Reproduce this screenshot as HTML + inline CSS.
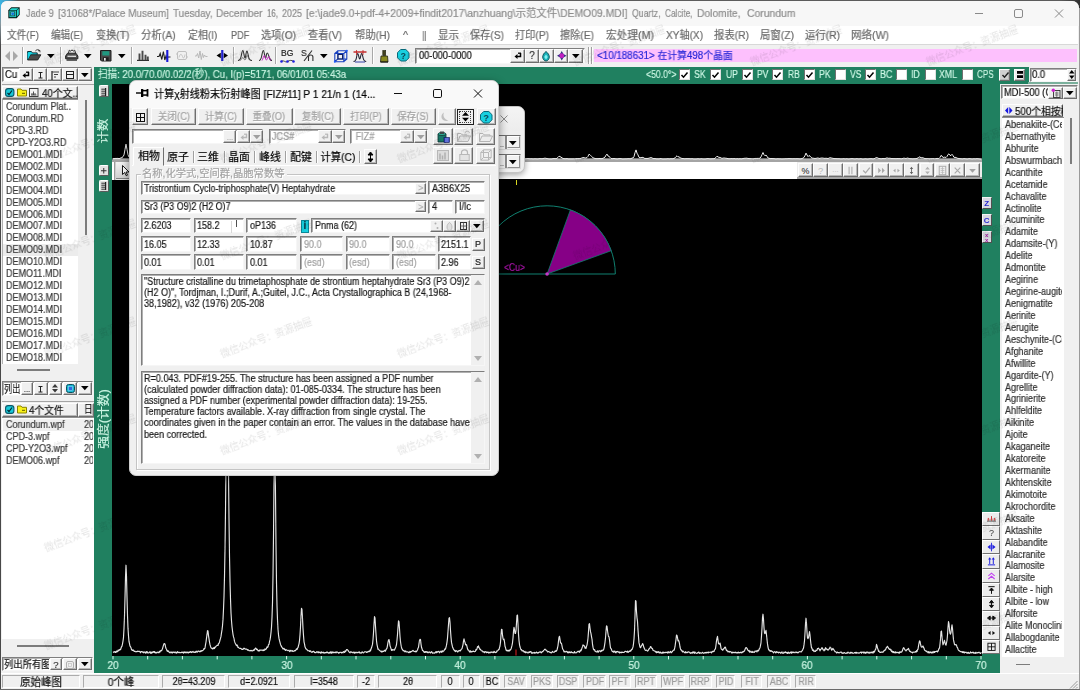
<!DOCTYPE html>
<html><head><meta charset="utf-8"><title>Jade 9</title>
<style>
html,body{margin:0;padding:0;}
body{width:1080px;height:690px;position:relative;overflow:hidden;background:#f0f0f0;font-family:"Liberation Sans","Noto Sans CJK SC",sans-serif;}
div{position:absolute;box-sizing:border-box;}
svg{position:absolute;overflow:visible;}
.t{white-space:nowrap;font-family:"Liberation Sans","Noto Sans CJK SC",sans-serif;will-change:transform;-webkit-text-stroke:.2px currentColor;}
.sunk{border:1.500px solid;border-color:#7e7e7e #f6f6f6 #f6f6f6 #7e7e7e;box-shadow:inset 1px 1px 0 #b0b0b0;}
.btn{background:#f0f0f0;border:1px solid;border-color:#fdfdfd #6e6e6e #6e6e6e #fdfdfd;box-shadow:inset -1px -1px 0 #b8b8b8;}
.g{background:#208060;}
.k{background:#000;}
.wm{-webkit-text-stroke:0;color:#000;opacity:.12;font-size:9.700px;line-height:12px;transform:rotate(-20.300deg);transform-origin:0 50%;white-space:nowrap;}
</style></head><body>

<div class="" style="left:0.0px;top:0.0px;width:1080.0px;height:14.0px;background:linear-gradient(90deg,#3ab4e4 0,#4a98b8 8px,#5c5c5c 18px,#5c5c5c 1060px,#303030 1080px);"></div>
<div class="" style="left:0.0px;top:6.0px;width:2.0px;height:684.0px;background:linear-gradient(180deg,#4ab0dc 0,#8898a0 18px,#484848 40px,#484848 100%);"></div>
<div class="" style="left:0.8px;top:0.7px;width:1078.2px;height:690.0px;background:#f0f0f0;border-radius:6px 7px 0 0;"></div>
<div class="" style="left:0.8px;top:0.7px;width:1078.2px;height:25.5px;background:#f7f7f7;border-radius:6px 7px 0 0;"></div>
<svg style="left:8px;top:7px" width="12" height="11.5" viewBox="0 0 12 11.5"><path d="M0.300 3.200l3-3h8.400v7.500l-3 3.500h-8.400z" fill="#06201c"/><rect x="1.400" y="3.600" width="6.600" height="6.500" fill="#1ec8c0"/><path d="M1.600 3l2-1.700h6.900l-2 1.700zM8.800 3.600l2-1.900v5.800l-2 2.300z" fill="#22d8d0"/><rect x="2.700" y="4.800" width="4" height="4" fill="#6ae8e4" stroke="#0a4a48" stroke-width=".8"/><circle cx="4.700" cy="6.800" r="1.400" fill="#1470e0"/></svg>
<div class="t title" style="left:26.0px;transform-origin:0 50%;top:7.0px;font-size:11px;line-height:13px;color:#8c8c8c;transform:scaleX(0.8356);">Jade 9</div>
<div class="t title" style="left:58.0px;transform-origin:0 50%;top:7.0px;font-size:11px;line-height:13px;color:#8c8c8c;transform:scaleX(0.903);">[31068*/Palace Museum]</div>
<div class="t title" style="left:173.0px;transform-origin:0 50%;top:7.0px;font-size:11px;line-height:13px;color:#8c8c8c;transform:scaleX(0.8971);">Tuesday,</div>
<div class="t title" style="left:216.0px;transform-origin:0 50%;top:7.0px;font-size:11px;line-height:13px;color:#8c8c8c;transform:scaleX(0.9163);">December</div>
<div class="t title" style="left:266.5px;transform-origin:0 50%;top:7.0px;font-size:11px;line-height:13px;color:#8c8c8c;transform:scaleX(0.7191);">16,</div>
<div class="t title" style="left:281.5px;transform-origin:0 50%;top:7.0px;font-size:11px;line-height:13px;color:#8c8c8c;transform:scaleX(0.8168);">2025</div>
<div class="t title" style="left:306.0px;transform-origin:0 50%;top:7.0px;font-size:11px;line-height:13px;color:#8c8c8c;transform:scaleX(0.9431);">[e:\jade9.0+pdf-4+2009+findit2017\anzhuang\示范文件\DEMO09.MDI]</div>
<div class="t title" style="left:631.5px;transform-origin:0 50%;top:7.0px;font-size:11px;line-height:13px;color:#8c8c8c;transform:scaleX(0.79);">Quartz,</div>
<div class="t title" style="left:665.0px;transform-origin:0 50%;top:7.0px;font-size:11px;line-height:13px;color:#8c8c8c;transform:scaleX(0.7496);">Calcite,</div>
<div class="t title" style="left:696.5px;transform-origin:0 50%;top:7.0px;font-size:11px;line-height:13px;color:#8c8c8c;transform:scaleX(0.9361);">Dolomite,</div>
<div class="t title" style="left:746.5px;transform-origin:0 50%;top:7.0px;font-size:11px;line-height:13px;color:#8c8c8c;transform:scaleX(0.9443);">Corundum</div>
<svg style="left:960px;top:0" width="118" height="26" viewBox="0 0 118 26"><g stroke="#8a8a8a" stroke-width="1" fill="none"><path d="M15 13.5h8"/><rect x="54.5" y="9.5" width="8" height="8" rx="1.5"/><path d="M95 9.5l8 8M103 9.5l-8 8"/></g></svg>
<div class="" style="left:1.0px;top:26.0px;width:1077.0px;height:18.0px;background:#fff;"></div>
<div class="t " style="left:7.3px;transform-origin:0 50%;top:28.5px;font-size:11px;line-height:13px;color:#6a6a6a;transform:scaleX(0.8794);">文件(F)</div>
<div class="t " style="left:51.0px;transform-origin:0 50%;top:28.5px;font-size:11px;line-height:13px;color:#6a6a6a;transform:scaleX(0.8726);">编辑(E)</div>
<div class="t " style="left:95.7px;transform-origin:0 50%;top:28.5px;font-size:11px;line-height:13px;color:#6a6a6a;transform:scaleX(0.9238);">变换(T)</div>
<div class="t " style="left:141.0px;transform-origin:0 50%;top:28.5px;font-size:11px;line-height:13px;color:#6a6a6a;transform:scaleX(0.9462);">分析(A)</div>
<div class="t " style="left:187.7px;transform-origin:0 50%;top:28.5px;font-size:11px;line-height:13px;color:#6a6a6a;transform:scaleX(0.9046);">定相(I)</div>
<div class="t " style="left:230.7px;transform-origin:0 50%;top:28.5px;font-size:11px;line-height:13px;color:#6a6a6a;transform:scaleX(0.8318);">PDF</div>
<div class="t " style="left:261.0px;transform-origin:0 50%;top:28.5px;font-size:11px;line-height:13px;color:#6a6a6a;transform:scaleX(0.9237);">选项(O)</div>
<div class="t " style="left:308.0px;transform-origin:0 50%;top:28.5px;font-size:11px;line-height:13px;color:#6a6a6a;transform:scaleX(0.9271);">查看(V)</div>
<div class="t " style="left:355.0px;transform-origin:0 50%;top:28.5px;font-size:11px;line-height:13px;color:#6a6a6a;transform:scaleX(0.9388);">帮助(H)</div>
<div class="t " style="left:403.0px;transform-origin:0 50%;top:28.5px;font-size:11px;line-height:13px;color:#6a6a6a;transform:scaleX(0.9668);">^</div>
<div class="t " style="left:422.0px;transform-origin:0 50%;top:28.5px;font-size:11px;line-height:13px;color:#6a6a6a;transform:scaleX(0.7869);">||</div>
<div class="t " style="left:438.0px;transform-origin:0 50%;top:28.5px;font-size:11px;line-height:13px;color:#6a6a6a;transform:scaleX(0.9545);">显示</div>
<div class="t " style="left:470.0px;transform-origin:0 50%;top:28.5px;font-size:11px;line-height:13px;color:#6a6a6a;transform:scaleX(0.9271);">保存(S)</div>
<div class="t " style="left:515.0px;transform-origin:0 50%;top:28.5px;font-size:11px;line-height:13px;color:#6a6a6a;transform:scaleX(0.9271);">打印(P)</div>
<div class="t " style="left:560.0px;transform-origin:0 50%;top:28.5px;font-size:11px;line-height:13px;color:#6a6a6a;transform:scaleX(0.9271);">擦除(E)</div>
<div class="t " style="left:606.0px;transform-origin:0 50%;top:28.5px;font-size:11px;line-height:13px;color:#6a6a6a;transform:scaleX(0.9697);">宏处理(M)</div>
<div class="t " style="left:666.0px;transform-origin:0 50%;top:28.5px;font-size:11px;line-height:13px;color:#6a6a6a;transform:scaleX(0.9171);">XY轴(X)</div>
<div class="t " style="left:714.0px;transform-origin:0 50%;top:28.5px;font-size:11px;line-height:13px;color:#6a6a6a;transform:scaleX(0.9388);">报表(R)</div>
<div class="t " style="left:760.0px;transform-origin:0 50%;top:28.5px;font-size:11px;line-height:13px;color:#6a6a6a;transform:scaleX(0.9432);">局窗(Z)</div>
<div class="t " style="left:805.0px;transform-origin:0 50%;top:28.5px;font-size:11px;line-height:13px;color:#6a6a6a;transform:scaleX(0.9388);">运行(R)</div>
<div class="t " style="left:851.0px;transform-origin:0 50%;top:28.5px;font-size:11px;line-height:13px;color:#6a6a6a;transform:scaleX(0.9567);">网络(W)</div>
<div class="" style="left:1.0px;top:44.0px;width:1077.0px;height:22.0px;background:#f0f0f0;border-top:1px solid #d8d8d8;"></div>
<svg style="left:4.5px;top:50.5px" width="13" height="10" viewBox="0 0 13 10"><path d="M5 0v10L0 5zM8 0v10l5-5z" fill="#a8a8a8"/></svg>
<div class="" style="left:22.0px;top:47.0px;width:2.0px;height:17.0px;border-left:1px solid #a8a8a8;border-right:1px solid #fff;"></div>
<svg style="left:27.0px;top:49.3px" width="14.5" height="12" viewBox="0 0 14.5 12"><path d="M0.6 11v-8.5h3.8l1 1.4h4.8v2" fill="#14d4e4" stroke="#0a3038" stroke-width="1"/><path d="M0.6 11l3-5.200h10.300l-3.200 5.200z" fill="#4a4a4a" stroke="#202020" stroke-width=".9"/><path d="M0.6 11l2.600-5v-2.300h-2.600z" fill="#14d4e4"/><path d="M8.300 2c1.300-1.600 3.300-1.800 4.500-.3M13 3.300l-.2-2-1.800.6" stroke="#303030" fill="none" stroke-width=".9"/></svg>
<svg style="left:47.0px;top:53.9px" width="7.6" height="4.3" viewBox="0 0 7.6 4.3"><path d="M0 0h7.6l-3.8 4.3z" fill="#000"/></svg>
<div class="" style="left:60.0px;top:47.0px;width:2.0px;height:17.0px;border-left:1px solid #a8a8a8;border-right:1px solid #fff;"></div>
<svg style="left:64.8px;top:49.3px" width="13.5" height="12" viewBox="0 0 13.5 12"><path d="M3.300 4.500l1-3.300 1.500 1 1.200-1.400 1.200 1.400 1.500-1 1 3.300" fill="#f4f4f4" stroke="#202020" stroke-width=".9"/><path d="M0.600 7l2-2.800h8.300l2 2.800v2.800h-12.300z" fill="#505050" stroke="#181818" stroke-width=".9"/><path d="M2.500 7.300h8.500" stroke="#f0f0f0" stroke-width="1.200"/><path d="M1.500 11h10.500" stroke="#303030" stroke-width="1.500"/></svg>
<svg style="left:84.2px;top:53.9px" width="7.6" height="4.3" viewBox="0 0 7.6 4.3"><path d="M0 0h7.6l-3.8 4.3z" fill="#000"/></svg>
<svg style="left:100.0px;top:49.8px" width="11.5" height="11.5" viewBox="0 0 11.5 11.5"><path d="M0.500 0.500h10.500v10.500h-9.500l-1-1z" fill="#484848" stroke="#202020"/><rect x="2.300" y="1.200" width="7" height="4.300" fill="#209880"/><rect x="3" y="7.300" width="5.600" height="3.700" fill="#202020"/><rect x="4" y="8" width="1.700" height="2.700" fill="#e8e8e8"/></svg>
<svg style="left:118.4px;top:53.9px" width="7.6" height="4.3" viewBox="0 0 7.6 4.3"><path d="M0 0h7.6l-3.8 4.3z" fill="#000"/></svg>
<div class="" style="left:131.0px;top:47.0px;width:2.0px;height:17.0px;border-left:1px solid #a8a8a8;border-right:1px solid #fff;"></div>
<svg style="left:137.0px;top:50.0px" width="12" height="11" viewBox="0 0 12 11"><path d="M0 10.400h12" stroke="#303030" stroke-width="1.200"/><path d="M2.500 10V3.500M5.500 10V0.800M8.500 10V4.800M10.800 10V6.500" stroke="#484848" stroke-width="1.900"/></svg>
<svg style="left:156.5px;top:49.5px" width="13.5" height="12" viewBox="0 0 13.5 12"><path d="M0 6.500h2l1.200-3 1.600 6 1.600-8 1.400 8.500 1.200-4 1 2.500 1-1.500h2.500" fill="none" stroke="#202020" stroke-width="1.100"/><path d="M10.300 0v12" stroke="#1818d8" stroke-width="2.100"/></svg>
<svg style="left:176.0px;top:50.0px" width="12" height="11" viewBox="0 0 12 11"><rect x="1.5" y="1.5" width="9" height="8" rx="1.5" fill="none" stroke="#c0c0c0"/><path d="M3 7.5c1-4 2.5-4 3.5-1s2 1 2.5-2" fill="none" stroke="#c4c4c4"/><path d="M0 4h2M10 7h2" stroke="#c0c0c0"/></svg>
<svg style="left:195.0px;top:51.0px" width="13.5" height="9" viewBox="0 0 13.5 9"><path d="M0 5h1.5l1-2.5 1.2 4.5 1.3-7 1.3 8.5 1.2-6 1 4 1-2.5 1 1.5h2" fill="none" stroke="#b8b8b8" stroke-width="1"/></svg>
<svg style="left:215.5px;top:50.0px" width="12.5" height="11" viewBox="0 0 12.5 11"><path d="M4.800 2.700v5.600L0.500 5.500zM7.700 2.700v5.600l4.300-2.800z" fill="#000"/><path d="M6.250 0v11" stroke="#2020d0" stroke-width="2.200"/></svg>
<div class="" style="left:233.0px;top:47.0px;width:2.0px;height:17.0px;border-left:1px solid #a8a8a8;border-right:1px solid #fff;"></div>
<svg style="left:238.0px;top:50.0px" width="14" height="11" viewBox="0 0 14 11"><path d="M0 10.5c2 0 2.5-1 3.2-4.5s1-5.5 1.6-5.5 1 3 1.5 5.5 1 3 1.4 0 .8-5 1.3-5 1 3 1.6 6 1.5 3.5 3.4 3.5" fill="none" stroke="#303030" stroke-width="1.1"/><path d="M2 10.5c1.5-.5 2-3 2.8-3s1.2 2.5 2.2 2.5 1.4-4.500 2.200-4.500 1.500 4.500 3 5" fill="none" stroke="#606060" stroke-width=".8"/></svg>
<svg style="left:259.0px;top:50.0px" width="13" height="11" viewBox="0 0 13 11"><path d="M0 10.500c1.500 0 2-1 2.700-4.500s1-5.500 1.600-5.500 1 3 1.500 5.500 1 3 1.400 0 .8-3 1.300-3 1 2 1.600 4 1.500 3.500 2.900 3.500" fill="none" stroke="#303030" stroke-width="1.1"/><path d="M3 10.500c1-1 1.500-5 2.300-5s1.200 4.500 2.200 4.500 1.400-3.500 2.200-3.500 1 3 2 4" fill="none" stroke="#c020c0" stroke-width="1"/></svg>
<div class="" style="left:275.0px;top:47.0px;width:2.0px;height:17.0px;border-left:1px solid #a8a8a8;border-right:1px solid #fff;"></div>
<div class="t " style="left:281.0px;transform-origin:0 50%;top:48.0px;font-size:8.5px;line-height:10.5px;color:#202020;transform:scaleX(1.0);">BG</div>
<svg style="left:280.0px;top:58.5px" width="15" height="4" viewBox="0 0 15 4"><path d="M1 2.500c3-2 4 1.500 6.500 0s4-1.500 6.500 0" fill="none" stroke="#202020" stroke-width=".8"/><circle cx="1.500" cy="2.500" r="1.300" fill="#2020e0"/><circle cx="7.500" cy="2.500" r="1.300" fill="#2020e0"/><circle cx="13.500" cy="2.500" r="1.300" fill="#2020e0"/></svg>
<div class="t " style="left:300.8px;transform-origin:0 50%;top:47.5px;font-size:9px;line-height:11px;color:#303030;transform:scaleX(0.95);">S</div>
<svg style="left:303.0px;top:50.0px" width="11" height="12" viewBox="0 0 11 12"><path d="M9 0.500L1 11" stroke="#303030" stroke-width="1.1"/><path d="M5.500 11v-4c0-1.500 1-2 2.200-2s2.200.5 2.200 2v4" fill="none" stroke="#303030" stroke-width="1.100"/></svg>
<svg style="left:319.5px;top:53.9px" width="7.6" height="4.3" viewBox="0 0 7.6 4.3"><path d="M0 0h7.6l-3.8 4.3z" fill="#000"/></svg>
<svg style="left:334.0px;top:49.5px" width="13.5" height="12.5" viewBox="0 0 13.5 12.5"><path d="M0.800 3.500h9v8.200h-9zM3.800 0.800h9v8.200h-9zM0.800 3.500l3-2.700M9.800 3.500l3-2.700M0.800 11.700l3-2.700M9.800 11.700l3-2.700" fill="none" stroke="#1840c0" stroke-width="1.100"/><rect x="4" y="4.500" width="4.500" height="4.500" fill="none" stroke="#102060" stroke-width="1"/><circle cx="0.800" cy="11.700" r="1" fill="#2060ff"/><circle cx="12.800" cy="0.800" r="1" fill="#2060ff"/></svg>
<svg style="left:353.0px;top:49.5px" width="14" height="12.5" viewBox="0 0 14 12.5"><path d="M0.500 2h13" stroke="#c02020" stroke-width="1.400"/><path d="M0.500 11.500c2 0 2.500-1 3-4s.8-4 1.300-4 .8 2 1.200 4 1 2 1.400 0 .8-4 1.300-4 .9 2 1.300 4 1 4 3.200 4" fill="none" stroke="#202030" stroke-width="1.100"/><path d="M2 12h10" stroke="#2030a0" stroke-width=".9"/><path d="M3.500 0v5M10 0v5" stroke="#c02020" stroke-width=".8"/></svg>
<div class="" style="left:372.0px;top:47.0px;width:2.0px;height:17.0px;border-left:1px solid #a8a8a8;border-right:1px solid #fff;"></div>
<svg style="left:379.5px;top:49.5px" width="8.5" height="12.5" viewBox="0 0 8.5 12.5"><rect x="2.800" y="0.500" width="2.900" height="5" fill="#404020" stroke="#202010" stroke-width=".6"/><path d="M1 6h6.500l0.500 6h-7.500z" fill="#888820" stroke="#202010" stroke-width=".8"/><path d="M0.500 12h7.500" stroke="#101010"/></svg>
<svg style="left:396.5px;top:49.3px" width="12.5" height="12.5" viewBox="0 0 12.5 12.5"><path d="M3.700 0.500h5.100l3.200 3.200v5.100l-3.200 3.200h-5.100l-3.200-3.200v-5.100z" fill="#18d0e0" stroke="#086878" stroke-width="1"/><text x="6.250" y="9.600" font-family="Liberation Sans,sans-serif" font-size="9" font-weight="bold" fill="#084858" text-anchor="middle">?</text></svg>
<div class="sunk" style="left:415.0px;top:47.8px;width:169.5px;height:15.8px;background:#fff;"></div>
<div class="t " style="left:418.5px;transform-origin:0 50%;top:49.7px;font-size:10px;line-height:12px;color:#101010;transform:scaleX(0.93);">00-000-0000</div>
<div class="btn" style="left:510.0px;top:49.2px;width:14.6px;height:13.6px;"></div>
<div class="btn" style="left:524.5px;top:49.2px;width:14.6px;height:13.6px;"></div>
<div class="btn" style="left:539.0px;top:49.2px;width:14.6px;height:13.6px;"></div>
<div class="btn" style="left:553.7px;top:49.2px;width:14.6px;height:13.6px;"></div>
<div class="btn" style="left:568.4px;top:49.2px;width:14.6px;height:13.6px;"></div>
<svg style="left:513.5px;top:52.0px" width="8" height="8" viewBox="0 0 8 8"><path d="M6.500 1v3.500h-4" fill="none" stroke="#000" stroke-width="1.500"/><path d="M0.500 4.500l3-2.500v5z" fill="#000"/><path d="M4 1.200h3" stroke="#000" stroke-width="1.300"/></svg>
<div class="t " style="left:331.8px;width:400px;text-align:center;transform-origin:50% 50%;top:50.0px;font-size:10px;line-height:12px;color:#404040;transform:scaleX(1);">?</div>
<svg style="left:542.3px;top:50.8px" width="8" height="10.5" viewBox="0 0 8 10.5"><path d="M4 0.500c2 1.500 3.300 3.500 3.300 5.500s-1.500 4-3.300 4-3.300-2-3.300-4 1.300-4 3.300-5.500z" fill="#18b0b8" stroke="#084850" stroke-width=".9"/><path d="M4 3.500l1.800 2.500-1.800 2.500-1.800-2.500z" fill="#80f0f0"/></svg>
<svg style="left:556.5px;top:51.0px" width="9.5" height="9.5" viewBox="0 0 9.5 9.5"><path d="M4.750 0l1.700 3 3.050 1.750-3.050 1.750-1.700 3-1.700-3-3.050-1.750 3.050-1.750z" fill="#303080"/><circle cx="4.750" cy="4.750" r="2.400" fill="#c020c0"/></svg>
<svg style="left:571.9px;top:54.1px" width="7.6" height="4.3" viewBox="0 0 7.6 4.3"><path d="M0 0h7.6l-3.8 4.3z" fill="#000"/></svg>
<div class="" style="left:587.5px;top:47.0px;width:2.0px;height:17.0px;border-left:1px solid #a0a0a0;border-right:1px solid #fff;"></div>
<div class="" style="left:590.5px;top:47.0px;width:2.0px;height:17.0px;border-left:1px solid #a0a0a0;border-right:1px solid #fff;"></div>
<div class="" style="left:593.5px;top:48.5px;width:483.5px;height:13.8px;background:#fdc0fd;"></div>
<div class="t " style="left:596.5px;transform-origin:0 50%;top:49.6px;font-size:10px;line-height:12px;color:#2828d8;transform:scaleX(0.98);">&lt;10/188631&gt; 在计算498个晶面</div>
<div class="sunk" style="left:2.2px;top:67.2px;width:90.0px;height:14.6px;background:#fff;"></div>
<div class="t " style="left:4.5px;transform-origin:0 50%;top:68.5px;font-size:10px;line-height:12px;color:#101010;transform:scaleX(0.95);">Cu</div>
<div class="btn" style="left:19.0px;top:68.2px;width:13.8px;height:13.3px;"></div>
<div class="btn" style="left:33.0px;top:68.2px;width:13.8px;height:13.3px;"></div>
<div class="btn" style="left:47.0px;top:68.2px;width:14.8px;height:13.3px;"></div>
<div class="btn" style="left:62.0px;top:68.2px;width:15.5px;height:13.3px;"></div>
<div class="btn" style="left:77.7px;top:68.2px;width:14.0px;height:13.3px;"></div>
<svg style="left:22.0px;top:71.0px" width="8" height="8" viewBox="0 0 8 8"><path d="M6.500 1v3.500h-4" fill="none" stroke="#000" stroke-width="1.500"/><path d="M0.500 4.500l3-2.500v5z" fill="#000"/><path d="M4 1.200h3" stroke="#000" stroke-width="1.300"/></svg>
<svg style="left:37.5px;top:72.0px" width="5" height="6.5" viewBox="0 0 5 6.5"><path d="M0.500 0.500h4M0.500 6h4M2.500 0.500v5.500" stroke="#202020" stroke-width="1" fill="none"/></svg>
<svg style="left:50.5px;top:70.5px" width="8" height="9" viewBox="0 0 8 9"><path d="M1 0v9" stroke="#202020" stroke-width="1.200"/><path d="M1 1h7M3 3.500h4M3 6h2" stroke="#404040" stroke-width="1"/></svg>
<svg style="left:66.0px;top:71.0px" width="8" height="8" viewBox="0 0 8 8"><rect x="0.500" y="0.500" width="7" height="7" fill="none" stroke="#202020"/><path d="M0.500 3.500h7" stroke="#202020"/></svg>
<svg style="left:80.9px;top:72.8px" width="7.6" height="4.3" viewBox="0 0 7.6 4.3"><path d="M0 0h7.6l-3.8 4.3z" fill="#000"/></svg>
<div class="g" style="left:94.0px;top:66.5px;width:934.5px;height:17.5px;"></div>
<div class="t " style="left:98.0px;transform-origin:0 50%;top:68.3px;font-size:11px;line-height:13px;color:#ccf6e4;transform:scaleX(0.8694);">扫描: 20.0/70.0/0.02/2(秒), Cu, I(p)=5171, 06/01/01 05:43a</div>
<div class="t " style="left:646.2px;transform-origin:0 50%;top:68.3px;font-size:11px;line-height:13px;color:#ccf6e4;transform:scaleX(0.789);">&lt;50.0°&gt;</div>
<div class="" style="left:679.3px;top:69.0px;width:11.0px;height:11.0px;background:#fff;border:1px solid;border-color:#707070 #e0e0e0 #e0e0e0 #707070;"></div>
<svg style="left:681.3px;top:71.5px" width="7" height="6.5" viewBox="0 0 7 6.5"><path d="M0.500 3l2 2.200 4-4.700" fill="none" stroke="#000" stroke-width="1.500"/></svg>
<div class="t " style="left:694.4px;transform-origin:0 50%;top:68.3px;font-size:11px;line-height:13px;color:#ccf6e4;transform:scaleX(0.8034);">SK</div>
<div class="" style="left:710.3px;top:69.0px;width:11.0px;height:11.0px;background:#fff;border:1px solid;border-color:#707070 #e0e0e0 #e0e0e0 #707070;"></div>
<svg style="left:712.3px;top:71.5px" width="7" height="6.5" viewBox="0 0 7 6.5"><path d="M0.500 3l2 2.200 4-4.700" fill="none" stroke="#000" stroke-width="1.500"/></svg>
<div class="t " style="left:725.5px;transform-origin:0 50%;top:68.3px;font-size:11px;line-height:13px;color:#ccf6e4;transform:scaleX(0.7722);">UP</div>
<div class="" style="left:741.6px;top:69.0px;width:11.0px;height:11.0px;background:#fff;border:1px solid;border-color:#707070 #e0e0e0 #e0e0e0 #707070;"></div>
<svg style="left:743.6px;top:71.5px" width="7" height="6.5" viewBox="0 0 7 6.5"><path d="M0.500 3l2 2.200 4-4.700" fill="none" stroke="#000" stroke-width="1.500"/></svg>
<div class="t " style="left:757.0px;transform-origin:0 50%;top:68.3px;font-size:11px;line-height:13px;color:#ccf6e4;transform:scaleX(0.7762);">PV</div>
<div class="" style="left:772.4px;top:69.0px;width:11.0px;height:11.0px;background:#fff;border:1px solid;border-color:#707070 #e0e0e0 #e0e0e0 #707070;"></div>
<svg style="left:774.4px;top:71.5px" width="7" height="6.5" viewBox="0 0 7 6.5"><path d="M0.500 3l2 2.200 4-4.700" fill="none" stroke="#000" stroke-width="1.500"/></svg>
<div class="t " style="left:787.8px;transform-origin:0 50%;top:68.3px;font-size:11px;line-height:13px;color:#ccf6e4;transform:scaleX(0.7656);">RB</div>
<div class="" style="left:803.6px;top:69.0px;width:11.0px;height:11.0px;background:#fff;border:1px solid;border-color:#707070 #e0e0e0 #e0e0e0 #707070;"></div>
<svg style="left:805.6px;top:71.5px" width="7" height="6.5" viewBox="0 0 7 6.5"><path d="M0.500 3l2 2.200 4-4.700" fill="none" stroke="#000" stroke-width="1.500"/></svg>
<div class="t " style="left:818.9px;transform-origin:0 50%;top:68.3px;font-size:11px;line-height:13px;color:#ccf6e4;transform:scaleX(0.8034);">PK</div>
<div class="" style="left:834.6px;top:69.0px;width:11.0px;height:11.0px;background:#fff;border:1px solid;border-color:#707070 #e0e0e0 #e0e0e0 #707070;"></div>
<div class="t " style="left:849.5px;transform-origin:0 50%;top:68.3px;font-size:11px;line-height:13px;color:#ccf6e4;transform:scaleX(0.783);">VS</div>
<div class="" style="left:865.2px;top:69.0px;width:11.0px;height:11.0px;background:#fff;border:1px solid;border-color:#707070 #e0e0e0 #e0e0e0 #707070;"></div>
<svg style="left:867.2px;top:71.5px" width="7" height="6.5" viewBox="0 0 7 6.5"><path d="M0.500 3l2 2.200 4-4.700" fill="none" stroke="#000" stroke-width="1.500"/></svg>
<div class="t " style="left:880.0px;transform-origin:0 50%;top:68.3px;font-size:11px;line-height:13px;color:#ccf6e4;transform:scaleX(0.818);">BC</div>
<div class="" style="left:896.0px;top:69.0px;width:11.0px;height:11.0px;background:#fff;border:1px solid;border-color:#707070 #e0e0e0 #e0e0e0 #707070;"></div>
<div class="t " style="left:911.0px;transform-origin:0 50%;top:68.3px;font-size:11px;line-height:13px;color:#ccf6e4;transform:scaleX(0.8);">ID</div>
<div class="" style="left:924.5px;top:69.0px;width:11.0px;height:11.0px;background:#fff;border:1px solid;border-color:#707070 #e0e0e0 #e0e0e0 #707070;"></div>
<div class="t " style="left:938.9px;transform-origin:0 50%;top:68.3px;font-size:11px;line-height:13px;color:#ccf6e4;transform:scaleX(0.7956);">XML</div>
<div class="" style="left:961.5px;top:69.0px;width:11.0px;height:11.0px;background:#fff;border:1px solid;border-color:#707070 #e0e0e0 #e0e0e0 #707070;"></div>
<div class="t " style="left:977.2px;transform-origin:0 50%;top:68.3px;font-size:11px;line-height:13px;color:#ccf6e4;transform:scaleX(0.7381);">CPS</div>
<div class="btn" style="left:999.4px;top:68.5px;width:11.0px;height:12.0px;background:#d0d0d0;"></div>
<svg style="left:1001.5px;top:71.5px" width="7" height="6.5" viewBox="0 0 7 6.5"><path d="M0.500 3l2 2.200 4-4.700" fill="none" stroke="#202020" stroke-width="1.400"/></svg>
<div class="btn" style="left:1013.7px;top:68.5px;width:11.5px;height:12.0px;"></div>
<svg style="left:1016.5px;top:71.0px" width="6" height="7" viewBox="0 0 6 7"><rect x="0" y="0" width="6" height="2.800" fill="#000"/><rect x="0" y="4.200" width="6" height="2.800" fill="#000"/></svg>
<div class="" style="left:1028.0px;top:82.3px;width:49.5px;height:1.3px;background:#7ab09c;"></div>
<div class="sunk" style="left:1029.5px;top:67.5px;width:47.0px;height:14.0px;background:#fff;"></div>
<div class="t " style="left:1032.0px;transform-origin:0 50%;top:68.8px;font-size:10px;line-height:12px;color:#101010;transform:scaleX(0.95);">0.0</div>
<div class="btn" style="left:1067.0px;top:68.5px;width:8.5px;height:12.0px;"></div>
<svg style="left:1068.5px;top:70.0px" width="5.5" height="9" viewBox="0 0 5.5 9"><path d="M2.750 0l2.750 3.500h-5.500zM2.750 9l2.750-3.500h-5.500z" fill="#000"/></svg>
<div class="" style="left:1.5px;top:83.7px;width:92.0px;height:1.2px;background:#a4a4a4;"></div>
<div class="btn" style="left:2.0px;top:85.5px;width:76.0px;height:13.7px;"></div>
<svg style="left:5.3px;top:88.0px" width="9.5" height="9" viewBox="0 0 9.5 9"><rect x="0.600" y="0.600" width="8.300" height="7.800" rx="2.500" fill="#18c8d8" stroke="#0a5868" stroke-width="1.100"/><path d="M2.500 5l1.500 1.500 3-4" fill="none" stroke="#002830" stroke-width="1.200"/></svg>
<svg style="left:16.8px;top:88.3px" width="10" height="8.5" viewBox="0 0 10 8.5"><path d="M0.500 8v-7h3.500l1 1.300h4.500v5.700z" fill="#f8f018" stroke="#8a8400" stroke-width="1"/><path d="M5 5.300h3" stroke="#605c00" stroke-width="1"/></svg>
<svg style="left:29.0px;top:88.0px" width="9.5" height="9" viewBox="0 0 9.5 9"><rect x="0.500" y="0.500" width="8.500" height="8" fill="#f4f4f4" stroke="#404040" stroke-width="1"/><path d="M2 7h5.500M3 7v-2M4.500 7v-3.500M6 7v-2" stroke="#404040" stroke-width=".9"/></svg>
<div class="t " style="left:41.5px;transform-origin:0 50%;top:87.0px;font-size:10.5px;line-height:12.5px;color:#101010;transform:scaleX(0.93);">40个文..</div>
<div class="" style="left:2.0px;top:99.3px;width:76.3px;height:264.3px;background:#fff;border-top:1px solid #909090;border-left:1px solid #b0b0b0;"></div>
<div class="t " style="left:6.0px;transform-origin:0 50%;top:101.1px;font-size:10px;line-height:12px;color:#383838;transform:scaleX(0.9);">Corundum Plat..</div>
<div class="t " style="left:6.0px;transform-origin:0 50%;top:113.0px;font-size:10px;line-height:12px;color:#383838;transform:scaleX(0.9);">Corundum.RD</div>
<div class="t " style="left:6.0px;transform-origin:0 50%;top:125.0px;font-size:10px;line-height:12px;color:#383838;transform:scaleX(0.9);">CPD-3.RD</div>
<div class="t " style="left:6.0px;transform-origin:0 50%;top:136.9px;font-size:10px;line-height:12px;color:#383838;transform:scaleX(0.9);">CPD-Y2O3.RD</div>
<div class="t " style="left:6.0px;transform-origin:0 50%;top:148.8px;font-size:10px;line-height:12px;color:#383838;transform:scaleX(0.9);">DEMO01.MDI</div>
<div class="t " style="left:6.0px;transform-origin:0 50%;top:160.8px;font-size:10px;line-height:12px;color:#383838;transform:scaleX(0.9);">DEMO02.MDI</div>
<div class="t " style="left:6.0px;transform-origin:0 50%;top:172.7px;font-size:10px;line-height:12px;color:#383838;transform:scaleX(0.9);">DEMO03.MDI</div>
<div class="t " style="left:6.0px;transform-origin:0 50%;top:184.6px;font-size:10px;line-height:12px;color:#383838;transform:scaleX(0.9);">DEMO04.MDI</div>
<div class="t " style="left:6.0px;transform-origin:0 50%;top:196.5px;font-size:10px;line-height:12px;color:#383838;transform:scaleX(0.9);">DEMO05.MDI</div>
<div class="t " style="left:6.0px;transform-origin:0 50%;top:208.5px;font-size:10px;line-height:12px;color:#383838;transform:scaleX(0.9);">DEMO06.MDI</div>
<div class="t " style="left:6.0px;transform-origin:0 50%;top:220.4px;font-size:10px;line-height:12px;color:#383838;transform:scaleX(0.9);">DEMO07.MDI</div>
<div class="t " style="left:6.0px;transform-origin:0 50%;top:232.3px;font-size:10px;line-height:12px;color:#383838;transform:scaleX(0.9);">DEMO08.MDI</div>
<div class="" style="left:3.0px;top:244.3px;width:75.0px;height:12.0px;background:#ececec;"></div>
<div class="t " style="left:6.0px;transform-origin:0 50%;top:244.3px;font-size:10px;line-height:12px;color:#383838;transform:scaleX(0.9);">DEMO09.MDI</div>
<div class="t " style="left:6.0px;transform-origin:0 50%;top:256.2px;font-size:10px;line-height:12px;color:#383838;transform:scaleX(0.9);">DEMO10.MDI</div>
<div class="t " style="left:6.0px;transform-origin:0 50%;top:268.1px;font-size:10px;line-height:12px;color:#383838;transform:scaleX(0.9);">DEMO11.MDI</div>
<div class="t " style="left:6.0px;transform-origin:0 50%;top:280.0px;font-size:10px;line-height:12px;color:#383838;transform:scaleX(0.9);">DEMO12.MDI</div>
<div class="t " style="left:6.0px;transform-origin:0 50%;top:292.0px;font-size:10px;line-height:12px;color:#383838;transform:scaleX(0.9);">DEMO13.MDI</div>
<div class="t " style="left:6.0px;transform-origin:0 50%;top:303.9px;font-size:10px;line-height:12px;color:#383838;transform:scaleX(0.9);">DEMO14.MDI</div>
<div class="t " style="left:6.0px;transform-origin:0 50%;top:315.8px;font-size:10px;line-height:12px;color:#383838;transform:scaleX(0.9);">DEMO15.MDI</div>
<div class="t " style="left:6.0px;transform-origin:0 50%;top:327.8px;font-size:10px;line-height:12px;color:#383838;transform:scaleX(0.9);">DEMO16.MDI</div>
<div class="t " style="left:6.0px;transform-origin:0 50%;top:339.7px;font-size:10px;line-height:12px;color:#383838;transform:scaleX(0.9);">DEMO17.MDI</div>
<div class="t " style="left:6.0px;transform-origin:0 50%;top:351.6px;font-size:10px;line-height:12px;color:#383838;transform:scaleX(0.9);">DEMO18.MDI</div>
<div class="" style="left:85.3px;top:100.0px;width:1.6px;height:135.0px;background:#7c7c7c;"></div>
<div class="" style="left:17.0px;top:369.3px;width:32.6px;height:1.5px;background:#7c7c7c;"></div>
<div class="sunk" style="left:2.0px;top:380.5px;width:90.5px;height:15.2px;background:#fff;"></div>
<div class="t " style="left:3.8px;transform-origin:0 50%;top:382.5px;font-size:11px;line-height:13px;color:#101010;transform:scaleX(0.74);">列出</div>
<div class="btn" style="left:20.5px;top:381.5px;width:12.5px;height:13.2px;"></div>
<div class="btn" style="left:34.0px;top:381.5px;width:13.7px;height:13.2px;"></div>
<div class="btn" style="left:48.8px;top:381.5px;width:13.2px;height:13.2px;"></div>
<div class="btn" style="left:62.8px;top:381.5px;width:14.0px;height:13.2px;"></div>
<div class="btn" style="left:77.8px;top:381.5px;width:14.2px;height:13.2px;"></div>
<div class="t " style="left:-173.0px;width:400px;text-align:center;transform-origin:50% 50%;top:384.5px;font-size:8px;line-height:10px;color:#404040;transform:scaleX(1);">...</div>
<svg style="left:38.4px;top:385.5px" width="5" height="6.5" viewBox="0 0 5 6.5"><path d="M0.500 0.500h4M0.500 6h4M2.500 0.500v5.500" stroke="#202020" stroke-width="1" fill="none"/></svg>
<svg style="left:52.4px;top:384.0px" width="6" height="8.5" viewBox="0 0 6 8.5"><path d="M3 0l3 3.400h-6zM3 8.500l3-3.400h-6z" fill="#383838"/></svg>
<svg style="left:66.0px;top:383.8px" width="9" height="9" viewBox="0 0 9 9"><rect x="0.500" y="0.500" width="8" height="8" rx="2" fill="#18b8d0" stroke="#0a5060"/><rect x="2.500" y="2.500" width="4" height="4" fill="#3068e0" stroke="#80e0f0" stroke-width=".6"/></svg>
<svg style="left:81.2px;top:386.4px" width="7.6" height="4.3" viewBox="0 0 7.6 4.3"><path d="M0 0h7.6l-3.8 4.3z" fill="#000"/></svg>
<div class="" style="left:1.5px;top:400.8px;width:92.0px;height:1.2px;background:#a4a4a4;"></div>
<div class="btn" style="left:2.0px;top:402.5px;width:75.5px;height:14.0px;"></div>
<svg style="left:5.2px;top:405.0px" width="9.5" height="9" viewBox="0 0 9.5 9"><rect x="0.600" y="0.600" width="8.300" height="7.800" rx="2.500" fill="#18c8d8" stroke="#0a5868" stroke-width="1.100"/><path d="M2.500 5l1.500 1.500 3-4" fill="none" stroke="#002830" stroke-width="1.200"/></svg>
<svg style="left:16.8px;top:405.3px" width="10" height="8.5" viewBox="0 0 10 8.5"><path d="M0.500 8v-7h3.500l1 1.300h4.500v5.700z" fill="#f8f018" stroke="#8a8400" stroke-width="1"/><path d="M5 5.300h3" stroke="#605c00" stroke-width="1"/></svg>
<div class="t " style="left:28.7px;transform-origin:0 50%;top:403.6px;font-size:10.5px;line-height:12.5px;color:#101010;transform:scaleX(0.93);">4个文件</div>
<div class="btn" style="left:78.0px;top:402.5px;width:15.5px;height:14.0px;"></div>
<div class="t " style="left:83.8px;transform-origin:0 50%;top:403.3px;font-size:11px;line-height:13px;color:#101010;transform:scaleX(0.78);">日</div>
<div class="" style="left:2.0px;top:416.5px;width:91.5px;height:222.5px;background:#fff;border-top:1px solid #909090;"></div>
<div class="" style="left:3.0px;top:418.7px;width:90.0px;height:12.0px;background:#f0f0f0;"></div>
<div class="t " style="left:6.0px;transform-origin:0 50%;top:418.7px;font-size:10px;line-height:12px;color:#383838;transform:scaleX(0.9);">Corundum.wpf</div>
<div class="" style="left:83.0px;top:418.7px;width:9.6px;height:12.0px;overflow:hidden;"><div class="t" style="left:1px;top:0;font-size:10px;line-height:12px;color:#383838;transform:scaleX(.9);transform-origin:0 50%">20</div></div>
<div class="t " style="left:6.0px;transform-origin:0 50%;top:430.7px;font-size:10px;line-height:12px;color:#383838;transform:scaleX(0.9);">CPD-3.wpf</div>
<div class="" style="left:83.0px;top:430.7px;width:9.6px;height:12.0px;overflow:hidden;"><div class="t" style="left:1px;top:0;font-size:10px;line-height:12px;color:#383838;transform:scaleX(.9);transform-origin:0 50%">20</div></div>
<div class="t " style="left:6.0px;transform-origin:0 50%;top:442.7px;font-size:10px;line-height:12px;color:#383838;transform:scaleX(0.9);">CPD-Y2O3.wpf</div>
<div class="" style="left:83.0px;top:442.7px;width:9.6px;height:12.0px;overflow:hidden;"><div class="t" style="left:1px;top:0;font-size:10px;line-height:12px;color:#383838;transform:scaleX(.9);transform-origin:0 50%">20</div></div>
<div class="t " style="left:6.0px;transform-origin:0 50%;top:454.7px;font-size:10px;line-height:12px;color:#383838;transform:scaleX(0.9);">DEMO06.wpf</div>
<div class="" style="left:83.0px;top:454.7px;width:9.6px;height:12.0px;overflow:hidden;"><div class="t" style="left:1px;top:0;font-size:10px;line-height:12px;color:#383838;transform:scaleX(.9);transform-origin:0 50%">20</div></div>
<div class="" style="left:17.0px;top:645.0px;width:51.6px;height:1.5px;background:#7c7c7c;"></div>
<div class="sunk" style="left:2.0px;top:657.2px;width:90.5px;height:13.8px;background:#fff;"></div>
<div class="" style="left:4.0px;top:658.5px;width:45.0px;height:11.5px;overflow:hidden;"><div class="t" style="left:0;top:0;font-size:10px;line-height:11.500px;color:#101010;transform:scaleX(.93);transform-origin:0 50%">列出所有图</div></div>
<div class="btn" style="left:49.6px;top:658.2px;width:12.0px;height:12.0px;"></div>
<div class="btn" style="left:62.6px;top:658.2px;width:14.5px;height:12.0px;"></div>
<div class="btn" style="left:78.3px;top:658.2px;width:13.5px;height:12.0px;"></div>
<div class="t " style="left:-144.4px;width:400px;text-align:center;transform-origin:50% 50%;top:658.5px;font-size:9.5px;line-height:11.5px;color:#404040;transform:scaleX(1);">?</div>
<svg style="left:66.0px;top:660.5px" width="8" height="8" viewBox="0 0 8 8"><rect x="0.500" y="0.500" width="7" height="7" rx="1.500" fill="none" stroke="#b0b0b0"/><rect x="2.500" y="2.500" width="3" height="3" fill="none" stroke="#c0c0c0" stroke-width=".7"/></svg>
<svg style="left:81.2px;top:662.4px" width="7.6" height="4.3" viewBox="0 0 7.6 4.3"><path d="M0 0h7.6l-3.8 4.3z" fill="#000"/></svg>
<div class="g" style="left:94.0px;top:83.5px;width:18.5px;height:590.0px;"></div>
<div class="g" style="left:94.0px;top:655.6px;width:905.8px;height:17.4px;"></div>
<div class="g" style="left:982.0px;top:83.5px;width:17.8px;height:590.0px;"></div>
<div class="k" style="left:112.3px;top:84.0px;width:869.7px;height:571.6px;"></div>
<div class="" style="left:99.0px;top:85.3px;width:9.5px;height:12.0px;background:#e2e2e2;border:1px solid;border-color:#fff #5a5a5a #5a5a5a #fff;border-radius:2px;"></div>
<svg style="left:101.0px;top:87.5px" width="5.5" height="8" viewBox="0 0 5.5 8"><path d="M4.600 0v8" stroke="#202020" stroke-width="1.200" fill="none"/><path d="M0.300 1.200h4M0.300 3.200h4M0.300 5.200h4M0.300 7.200h4" stroke="#303030" stroke-width="1" fill="none"/></svg>
<div class="" style="left:99.0px;top:164.7px;width:9.5px;height:11.3px;background:#e2e2e2;border:1px solid;border-color:#fff #5a5a5a #5a5a5a #fff;border-radius:2px;"></div>
<svg style="left:101.0px;top:167.6px" width="5.5" height="5.5" viewBox="0 0 5.5 5.5"><path d="M2.750 0v5.500M0 2.750h5.500" stroke="#303030" stroke-width="1"/></svg>
<div class="" style="left:99.0px;top:180.0px;width:9.5px;height:11.5px;background:#e2e2e2;border:1px solid;border-color:#fff #5a5a5a #5a5a5a #fff;border-radius:2px;"></div>
<svg style="left:101.0px;top:182.0px" width="5.5" height="8" viewBox="0 0 5.5 8"><path d="M4.600 0v8" stroke="#202020" stroke-width="1.200" fill="none"/><path d="M0.300 1.200h4M0.300 3.200h4M0.300 5.200h4M0.300 7.200h4" stroke="#303030" stroke-width="1" fill="none"/></svg>
<div class="t" style="left:3.2px;top:124.3px;width:200px;height:14px;line-height:14px;text-align:center;font-size:11.5px;color:#ccf6e4;transform:rotate(-90deg) scaleX(1.08);transform-origin:50% 50%;">计数</div>
<div class="t" style="left:3.5px;top:412.0px;width:200px;height:14px;line-height:14px;text-align:center;font-size:12.3px;color:#ccf6e4;transform:rotate(-90deg) scaleX(1.04);transform-origin:50% 50%;">强度(计数)</div>
<svg style="left:0.0px;top:655.6px" width="1080" height="4" viewBox="0 0 1080 4"><path d="M113.0 0v3.400M147.7 0v3.400M182.4 0v3.400M217.2 0v3.400M251.9 0v3.400M286.6 0v3.400M321.3 0v3.400M356.0 0v3.400M390.8 0v3.400M425.5 0v3.400M460.2 0v3.400M494.9 0v3.400M529.6 0v3.400M564.4 0v3.400M599.1 0v3.400M633.8 0v3.400M668.5 0v3.400M703.2 0v3.400M738.0 0v3.400M772.7 0v3.400M807.4 0v3.400M842.1 0v3.400M876.8 0v3.400M911.6 0v3.400M946.3 0v3.400M981.0 0v3.400" stroke="#d8fff0" stroke-width="1" fill="none"/></svg>
<div class="t " style="left:-87.0px;width:400px;text-align:center;transform-origin:50% 50%;top:659.0px;font-size:10.5px;line-height:12.5px;color:#ccf6e4;transform:scaleX(0.95);">20</div>
<div class="t " style="left:86.6px;width:400px;text-align:center;transform-origin:50% 50%;top:659.0px;font-size:10.5px;line-height:12.5px;color:#ccf6e4;transform:scaleX(0.95);">30</div>
<div class="t " style="left:260.2px;width:400px;text-align:center;transform-origin:50% 50%;top:659.0px;font-size:10.5px;line-height:12.5px;color:#ccf6e4;transform:scaleX(0.95);">40</div>
<div class="t " style="left:433.8px;width:400px;text-align:center;transform-origin:50% 50%;top:659.0px;font-size:10.5px;line-height:12.5px;color:#ccf6e4;transform:scaleX(0.95);">50</div>
<div class="t " style="left:607.4px;width:400px;text-align:center;transform-origin:50% 50%;top:659.0px;font-size:10.5px;line-height:12.5px;color:#ccf6e4;transform:scaleX(0.95);">60</div>
<div class="t " style="left:781.0px;width:400px;text-align:center;transform-origin:50% 50%;top:659.0px;font-size:10.5px;line-height:12.5px;color:#ccf6e4;transform:scaleX(0.95);">70</div>
<svg style="left:0.0px;top:0.0px" width="1080" height="690" viewBox="0 0 1080 690"><defs><clipPath id="cpm"><rect x="112.300" y="180" width="869.700" height="475.600"/></clipPath><clipPath id="cpu"><rect x="112.300" y="84" width="869.700" height="76.500"/></clipPath></defs><path d="M113.0 652.5L113.5 652.0L114.0 652.2L114.5 651.8L115.0 651.6L115.5 652.4L116.0 652.4L116.5 651.0L117.0 651.8L117.5 651.6L118.0 650.2L118.5 650.8L119.0 649.9L119.5 650.1L120.0 649.4L120.5 649.7L121.0 648.2L121.5 646.8L122.0 646.1L122.5 643.8L123.0 641.1L123.5 637.3L124.0 628.3L124.5 615.9L125.0 597.8L125.5 577.2L126.0 565.2L126.5 576.5L127.0 597.1L127.5 615.4L128.0 628.4L128.5 635.9L129.0 641.5L129.5 643.7L130.0 646.2L130.5 646.7L131.0 647.7L131.5 649.7L132.0 650.2L132.5 650.5L133.0 649.7L133.5 650.8L134.0 650.8L134.5 651.5L135.0 651.3L135.5 651.7L136.0 651.8L136.5 651.6L137.0 651.6L137.5 651.2L138.0 651.6L138.5 651.3L139.0 651.5L139.5 651.3L140.0 651.9L140.5 652.7L141.0 651.6L141.5 651.5L142.0 651.6L142.5 652.2L143.0 652.0L143.5 652.8L144.0 651.8L144.5 652.2L145.0 652.7L145.5 653.1L146.0 651.8L146.5 651.6L147.0 653.1L147.5 651.9L148.0 652.6L148.5 653.0L149.0 652.8L149.5 652.0L150.0 651.8L150.5 653.2L151.0 652.2L151.5 653.2L152.0 652.1L152.5 652.7L153.0 651.8L153.5 651.6L154.0 652.4L154.5 651.6L155.0 652.7L155.5 653.0L156.0 652.2L156.5 653.0L157.0 652.7L157.5 652.3L158.0 652.0L158.5 652.6L159.0 652.7L159.5 651.3L160.0 652.0L160.5 650.7L161.0 650.5L161.5 650.8L162.0 649.9L162.5 648.6L163.0 646.9L163.5 645.1L164.0 643.8L164.5 643.5L165.0 644.2L165.5 646.7L166.0 648.5L166.5 649.2L167.0 650.9L167.5 651.3L168.0 650.6L168.5 651.6L169.0 651.7L169.5 652.7L170.0 652.2L170.5 652.0L171.0 652.9L171.5 652.0L172.0 652.0L172.5 653.0L173.0 652.1L173.5 652.4L174.0 652.0L174.5 652.6L175.0 652.0L175.5 652.0L176.0 653.1L176.5 653.1L177.0 652.1L177.5 651.6L178.0 652.8L178.5 652.4L179.0 652.2L179.5 652.7L180.0 652.6L180.5 652.7L181.0 652.6L181.5 652.2L182.0 652.7L182.5 652.5L183.0 651.9L183.5 653.1L184.0 652.2L184.5 651.9L185.0 652.6L185.5 652.7L186.0 651.8L186.5 652.7L187.0 652.8L187.5 652.3L188.0 651.9L188.5 652.9L189.0 652.5L189.5 652.5L190.0 651.6L190.5 652.2L191.0 651.6L191.5 652.6L192.0 652.3L192.5 651.8L193.0 651.4L193.5 652.1L194.0 652.4L194.5 652.5L195.0 651.9L195.5 652.4L196.0 651.3L196.5 651.2L197.0 652.2L197.5 652.0L198.0 651.1L198.5 651.3L199.0 651.0L199.5 651.6L200.0 651.9L200.5 651.5L201.0 650.6L201.5 651.2L202.0 650.9L202.5 650.6L203.0 650.3L203.5 649.9L204.0 648.5L204.5 649.0L205.0 648.0L205.5 644.7L206.0 642.0L206.5 638.1L207.0 634.7L207.5 630.6L208.0 631.0L208.5 635.6L209.0 638.8L209.5 642.1L210.0 644.7L210.5 646.4L211.0 647.7L211.5 648.1L212.0 648.6L212.5 648.9L213.0 648.1L213.5 648.6L214.0 647.6L214.5 648.6L215.0 647.0L215.5 647.1L216.0 646.3L216.5 645.9L217.0 645.4L217.5 645.3L218.0 645.5L218.5 643.5L219.0 643.4L219.5 642.0L220.0 640.0L220.5 638.4L221.0 636.4L221.5 632.8L222.0 629.9L222.5 625.7L223.0 619.4L223.5 609.3L224.0 596.5L224.5 576.5L225.0 549.2L225.5 511.3L226.0 463.2L226.5 413.2L227.0 381.4L227.5 384.5L228.0 422.4L228.5 472.8L229.0 518.7L229.5 556.1L230.0 581.3L230.5 599.0L231.0 612.7L231.5 620.8L232.0 626.8L232.5 630.8L233.0 634.3L233.5 636.8L234.0 638.4L234.5 641.4L235.0 642.7L235.5 643.8L236.0 644.7L236.5 645.7L237.0 644.9L237.5 645.7L238.0 647.5L238.5 647.3L239.0 648.0L239.5 648.3L240.0 648.5L240.5 648.3L241.0 648.6L241.5 649.1L242.0 649.4L242.5 649.2L243.0 649.4L243.5 648.6L244.0 648.1L244.5 648.5L245.0 649.0L245.5 649.1L246.0 649.1L246.5 649.1L247.0 649.2L247.5 650.2L248.0 649.7L248.5 650.2L249.0 650.6L249.5 650.8L250.0 650.7L250.5 650.4L251.0 650.9L251.5 650.4L252.0 650.8L252.5 651.0L253.0 650.4L253.5 649.9L254.0 650.6L254.5 649.5L255.0 649.0L255.5 648.0L256.0 648.2L256.5 649.6L257.0 649.2L257.5 649.7L258.0 650.8L258.5 650.6L259.0 651.2L259.5 650.1L260.0 650.4L260.5 650.0L261.0 650.0L261.5 650.2L262.0 650.0L262.5 650.1L263.0 650.7L263.5 649.8L264.0 650.5L264.5 650.1L265.0 648.8L265.5 649.6L266.0 649.2L266.5 648.7L267.0 646.9L267.5 647.4L268.0 646.9L268.5 644.6L269.0 644.5L269.5 641.7L270.0 639.9L270.5 636.8L271.0 632.6L271.5 627.3L272.0 617.4L272.5 602.7L273.0 575.4L273.5 535.7L274.0 483.6L274.5 442.7L275.0 447.3L275.5 493.9L276.0 545.6L276.5 582.4L277.0 605.8L277.5 619.7L278.0 629.3L278.5 634.8L279.0 638.4L279.5 640.5L280.0 642.3L280.5 644.4L281.0 645.6L281.5 646.5L282.0 647.4L282.5 647.9L283.0 649.0L283.5 648.7L284.0 648.3L284.5 649.6L285.0 649.3L285.5 650.5L286.0 649.8L286.5 649.9L287.0 650.1L287.5 650.5L288.0 650.7L288.5 650.5L289.0 650.2L289.5 651.4L290.0 651.6L290.5 650.6L291.0 650.3L291.5 651.0L292.0 651.1L292.5 650.6L293.0 651.4L293.5 651.2L294.0 651.2L294.5 650.5L295.0 650.8L295.5 650.7L296.0 649.7L296.5 648.9L297.0 649.5L297.5 648.2L298.0 647.7L298.5 645.6L299.0 643.8L299.5 640.6L300.0 634.9L300.5 626.9L301.0 616.0L301.5 608.3L302.0 609.7L302.5 618.2L303.0 628.4L303.5 635.5L304.0 641.8L304.5 643.8L305.0 646.8L305.5 647.9L306.0 649.0L306.5 649.1L307.0 649.6L307.5 650.4L308.0 650.8L308.5 650.7L309.0 650.6L309.5 651.5L310.0 651.1L310.5 650.9L311.0 651.8L311.5 652.2L312.0 652.3L312.5 651.6L313.0 651.7L313.5 651.3L314.0 651.5L314.5 652.5L315.0 652.7L315.5 652.6L316.0 652.7L316.5 651.9L317.0 651.7L317.5 651.7L318.0 652.7L318.5 651.8L319.0 652.7L319.5 652.5L320.0 652.0L320.5 653.1L321.0 653.1L321.5 651.9L322.0 652.8L322.5 652.7L323.0 652.3L323.5 652.2L324.0 653.3L324.5 652.8L325.0 652.6L325.5 652.5L326.0 653.0L326.5 652.4L327.0 651.8L327.5 652.7L328.0 652.5L328.5 653.1L329.0 652.9L329.5 652.3L330.0 653.2L330.5 651.9L331.0 651.9L331.5 653.2L332.0 651.9L332.5 652.8L333.0 652.1L333.5 652.2L334.0 652.9L334.5 652.3L335.0 652.3L335.5 652.1L336.0 652.9L336.5 652.2L337.0 651.8L337.5 652.3L338.0 652.5L338.5 653.2L339.0 652.5L339.5 652.8L340.0 652.2L340.5 652.2L341.0 652.4L341.5 653.0L342.0 652.2L342.5 652.2L343.0 652.8L343.5 651.6L344.0 651.9L344.5 652.5L345.0 650.9L345.5 651.7L346.0 650.8L346.5 649.6L347.0 649.5L347.5 649.8L348.0 650.3L348.5 651.2L349.0 651.9L349.5 652.4L350.0 652.8L350.5 651.9L351.0 651.9L351.5 652.3L352.0 652.0L352.5 652.7L353.0 652.8L353.5 652.7L354.0 651.9L354.5 653.2L355.0 652.5L355.5 652.9L356.0 652.1L356.5 652.7L357.0 652.8L357.5 652.6L358.0 652.4L358.5 652.0L359.0 652.7L359.5 651.9L360.0 653.1L360.5 652.8L361.0 653.1L361.5 653.0L362.0 651.9L362.5 652.0L363.0 652.8L363.5 652.8L364.0 652.4L364.5 651.8L365.0 651.7L365.5 651.7L366.0 651.9L366.5 652.5L367.0 652.0L367.5 652.2L368.0 651.6L368.5 651.3L369.0 651.7L369.5 651.4L370.0 650.1L370.5 650.9L371.0 649.0L371.5 647.8L372.0 646.1L372.5 644.4L373.0 639.7L373.5 632.9L374.0 624.2L374.5 616.6L375.0 618.0L375.5 626.5L376.0 634.0L376.5 640.8L377.0 644.6L377.5 646.8L378.0 649.3L378.5 649.0L379.0 649.8L379.5 650.5L380.0 650.7L380.5 651.1L381.0 651.6L381.5 651.2L382.0 652.1L382.5 651.4L383.0 651.1L383.5 651.4L384.0 651.2L384.5 650.4L385.0 650.3L385.5 651.2L386.0 649.6L386.5 648.9L387.0 648.2L387.5 645.3L388.0 642.3L388.5 640.0L389.0 639.6L389.5 641.8L390.0 645.8L390.5 647.1L391.0 648.7L391.5 650.4L392.0 649.6L392.5 650.2L393.0 649.7L393.5 650.0L394.0 649.8L394.5 650.1L395.0 648.8L395.5 647.7L396.0 646.4L396.5 644.7L397.0 640.2L397.5 634.5L398.0 627.2L398.5 620.9L399.0 621.7L399.5 628.7L400.0 636.5L400.5 641.7L401.0 645.0L401.5 647.5L402.0 649.0L402.5 649.5L403.0 650.6L403.5 650.8L404.0 650.6L404.5 651.4L405.0 651.9L405.5 650.9L406.0 651.3L406.5 652.0L407.0 652.0L407.5 651.8L408.0 651.8L408.5 652.4L409.0 652.7L409.5 652.3L410.0 651.4L410.5 652.3L411.0 651.5L411.5 651.7L412.0 651.2L412.5 650.8L413.0 650.3L413.5 650.8L414.0 651.4L414.5 651.5L415.0 651.7L415.5 651.2L416.0 651.8L416.5 651.7L417.0 650.6L417.5 650.0L418.0 648.2L418.5 647.3L419.0 643.7L419.5 640.4L420.0 639.3L420.5 639.5L421.0 644.1L421.5 647.3L422.0 648.7L422.5 650.5L423.0 650.5L423.5 651.4L424.0 652.1L424.5 652.4L425.0 651.5L425.5 652.3L426.0 651.6L426.5 652.2L427.0 651.5L427.5 652.6L428.0 652.7L428.5 652.7L429.0 651.8L429.5 652.1L430.0 652.6L430.5 653.0L431.0 652.1L431.5 651.6L432.0 652.2L432.5 653.2L433.0 653.1L433.5 653.0L434.0 652.9L434.5 653.1L435.0 653.0L435.5 652.1L436.0 651.6L436.5 652.7L437.0 651.5L437.5 652.2L438.0 651.7L438.5 651.4L439.0 651.4L439.5 652.8L440.0 652.2L440.5 651.7L441.0 651.0L441.5 652.3L442.0 651.8L442.5 650.8L443.0 651.7L443.5 651.0L444.0 650.8L444.5 649.8L445.0 648.8L445.5 649.2L446.0 647.1L446.5 645.2L447.0 642.1L447.5 638.1L448.0 631.2L448.5 624.5L449.0 618.1L449.5 617.7L450.0 622.3L450.5 630.5L451.0 637.4L451.5 642.4L452.0 644.7L452.5 646.9L453.0 648.0L453.5 649.4L454.0 649.9L454.5 650.8L455.0 650.3L455.5 651.6L456.0 651.1L456.5 650.7L457.0 651.0L457.5 651.9L458.0 651.7L458.5 650.8L459.0 651.0L459.5 650.5L460.0 650.4L460.5 650.8L461.0 649.6L461.5 649.1L462.0 648.6L462.5 646.6L463.0 644.6L463.5 641.2L464.0 638.8L464.5 641.1L465.0 642.3L465.5 644.5L466.0 645.0L466.5 644.6L467.0 646.7L467.5 648.8L468.0 650.0L468.5 650.1L469.0 650.7L469.5 652.0L470.0 651.9L470.5 650.8L471.0 652.1L471.5 651.6L472.0 651.8L472.5 651.3L473.0 651.5L473.5 651.1L474.0 651.4L474.5 651.7L475.0 651.5L475.5 651.2L476.0 649.4L476.5 649.8L477.0 649.0L477.5 646.5L478.0 647.1L478.5 645.9L479.0 647.8L479.5 648.1L480.0 649.5L480.5 649.3L481.0 650.3L481.5 650.8L482.0 650.9L482.5 651.0L483.0 652.0L483.5 651.8L484.0 652.1L484.5 652.7L485.0 651.6L485.5 652.0L486.0 651.7L486.5 652.7L487.0 652.2L487.5 652.4L488.0 651.9L488.5 653.0L489.0 652.6L489.5 652.3L490.0 653.0L490.5 652.2L491.0 651.9L491.5 652.4L492.0 652.0L492.5 652.1L493.0 652.7L493.5 652.4L494.0 651.3L494.5 652.3L495.0 652.1L495.5 652.6L496.0 652.2L496.5 652.2L497.0 650.8L497.5 650.9L498.0 650.3L498.5 649.6L499.0 649.5L499.5 647.7L500.0 646.0L500.5 642.1L501.0 635.1L501.5 629.4L502.0 629.6L502.5 635.2L503.0 638.4L503.5 639.7L504.0 639.0L504.5 641.9L505.0 646.2L505.5 647.5L506.0 649.9L506.5 650.7L507.0 650.1L507.5 650.9L508.0 650.6L508.5 650.4L509.0 651.3L509.5 650.0L510.0 650.4L510.5 649.7L511.0 649.1L511.5 647.3L512.0 645.4L512.5 642.8L513.0 638.0L513.5 631.3L514.0 627.3L514.5 629.7L515.0 633.3L515.5 633.5L516.0 630.6L516.5 623.1L517.0 615.4L517.5 615.1L518.0 624.2L518.5 634.0L519.0 640.6L519.5 644.6L520.0 647.0L520.5 648.4L521.0 649.7L521.5 649.5L522.0 650.9L522.5 651.0L523.0 650.6L523.5 650.9L524.0 651.9L524.5 652.1L525.0 651.3L525.5 652.7L526.0 652.6L526.5 652.0L527.0 652.1L527.5 652.7L528.0 653.0L528.5 652.7L529.0 651.9L529.5 652.4L530.0 651.6L530.5 651.9L531.0 651.6L531.5 653.2L532.0 652.9L532.5 653.2L533.0 652.6L533.5 652.7L534.0 653.2L534.5 652.4L535.0 653.1L535.5 652.8L536.0 652.9L536.5 652.0L537.0 652.6L537.5 652.9L538.0 653.2L538.5 652.6L539.0 652.3L539.5 652.2L540.0 651.8L540.5 651.9L541.0 652.7L541.5 652.8L542.0 651.7L542.5 651.5L543.0 651.6L543.5 650.6L544.0 650.1L544.5 649.5L545.0 649.1L545.5 649.9L546.0 650.0L546.5 650.4L547.0 650.9L547.5 652.0L548.0 651.8L548.5 651.5L549.0 651.7L549.5 652.1L550.0 652.4L550.5 652.3L551.0 652.8L551.5 652.8L552.0 652.0L552.5 651.4L553.0 652.1L553.5 652.2L554.0 652.2L554.5 651.9L555.0 651.2L555.5 651.5L556.0 650.4L556.5 651.1L557.0 649.9L557.5 648.0L558.0 645.6L558.5 641.1L559.0 637.3L559.5 636.3L560.0 639.4L560.5 642.9L561.0 643.0L561.5 643.5L562.0 645.8L562.5 648.5L563.0 649.5L563.5 650.1L564.0 651.9L564.5 651.3L565.0 652.0L565.5 651.9L566.0 651.4L566.5 651.4L567.0 652.0L567.5 652.7L568.0 651.6L568.5 652.8L569.0 652.5L569.5 651.8L570.0 652.7L570.5 652.7L571.0 651.7L571.5 651.7L572.0 652.7L572.5 652.5L573.0 652.7L573.5 652.9L574.0 652.7L574.5 651.5L575.0 652.9L575.5 652.7L576.0 652.7L576.5 652.8L577.0 652.0L577.5 651.6L578.0 651.4L578.5 651.6L579.0 651.2L579.5 652.3L580.0 651.5L580.5 650.0L581.0 650.8L581.5 649.6L582.0 647.9L582.5 646.7L583.0 644.8L583.5 645.3L584.0 645.9L584.5 645.9L585.0 648.2L585.5 647.4L586.0 648.4L586.5 646.3L587.0 645.1L587.5 642.1L588.0 638.1L588.5 631.6L589.0 624.1L589.5 623.7L590.0 628.0L590.5 631.7L591.0 633.7L591.5 636.6L592.0 639.1L592.5 644.1L593.0 647.2L593.5 649.4L594.0 649.9L594.5 649.5L595.0 651.0L595.5 651.5L596.0 651.7L596.5 651.9L597.0 651.6L597.5 650.8L598.0 652.2L598.5 652.0L599.0 650.8L599.5 650.7L600.0 650.7L600.5 651.7L601.0 651.4L601.5 650.3L602.0 650.8L602.5 650.1L603.0 650.2L603.5 650.0L604.0 648.3L604.5 645.6L605.0 642.3L605.5 637.7L606.0 631.4L606.5 625.9L607.0 626.2L607.5 630.6L608.0 634.0L608.5 636.5L609.0 636.8L609.5 639.9L610.0 644.2L610.5 648.0L611.0 648.4L611.5 649.5L612.0 651.1L612.5 651.4L613.0 651.8L613.5 652.2L614.0 650.9L614.5 651.9L615.0 651.3L615.5 652.6L616.0 652.8L616.5 651.5L617.0 651.7L617.5 651.4L618.0 651.9L618.5 652.2L619.0 651.8L619.5 652.9L620.0 652.2L620.5 652.4L621.0 652.8L621.5 652.1L622.0 652.5L622.5 652.2L623.0 652.4L623.5 652.5L624.0 652.4L624.5 652.0L625.0 651.4L625.5 651.4L626.0 651.5L626.5 651.5L627.0 652.3L627.5 651.1L628.0 652.1L628.5 652.3L629.0 651.5L629.5 651.0L630.0 651.4L630.5 650.6L631.0 650.8L631.5 649.3L632.0 649.4L632.5 648.4L633.0 646.9L633.5 643.8L634.0 638.9L634.5 630.8L635.0 616.3L635.5 600.6L636.0 601.2L636.5 611.7L637.0 617.6L637.5 621.3L638.0 630.1L638.5 636.9L639.0 642.9L639.5 644.8L640.0 647.1L640.5 647.7L641.0 646.9L641.5 645.6L642.0 645.1L642.5 643.6L643.0 644.2L643.5 646.1L644.0 647.8L644.5 648.7L645.0 649.8L645.5 650.4L646.0 650.3L646.5 650.1L647.0 650.6L647.5 651.1L648.0 650.7L648.5 649.9L649.0 648.8L649.5 648.6L650.0 647.7L650.5 646.6L651.0 646.8L651.5 648.1L652.0 648.3L652.5 648.7L653.0 650.2L653.5 650.5L654.0 650.7L654.5 651.0L655.0 651.1L655.5 652.0L656.0 651.7L656.5 652.7L657.0 651.6L657.5 652.4L658.0 652.3L658.5 651.7L659.0 652.7L659.5 652.9L660.0 651.9L660.5 652.3L661.0 653.1L661.5 653.2L662.0 652.7L662.5 653.2L663.0 651.9L663.5 653.0L664.0 652.8L664.5 652.6L665.0 652.4L665.5 652.6L666.0 652.2L666.5 652.2L667.0 652.5L667.5 653.0L668.0 651.6L668.5 652.0L669.0 653.0L669.5 652.3L670.0 651.8L670.5 651.3L671.0 652.7L671.5 652.7L672.0 651.7L672.5 651.6L673.0 650.6L673.5 650.2L674.0 650.3L674.5 649.0L675.0 646.7L675.5 642.9L676.0 639.5L676.5 635.1L677.0 635.4L677.5 637.6L678.0 641.0L678.5 640.3L679.0 641.5L679.5 643.6L680.0 647.0L680.5 648.9L681.0 649.9L681.5 650.1L682.0 651.1L682.5 651.9L683.0 651.0L683.5 651.7L684.0 652.0L684.5 652.6L685.0 652.6L685.5 651.7L686.0 652.9L686.5 652.4L687.0 652.2L687.5 652.7L688.0 652.1L688.5 651.9L689.0 652.0L689.5 652.2L690.0 653.0L690.5 653.3L691.0 652.7L691.5 652.9L692.0 653.1L692.5 652.0L693.0 653.1L693.5 652.1L694.0 651.9L694.5 653.3L695.0 652.0L695.5 652.8L696.0 653.1L696.5 653.2L697.0 653.4L697.5 652.7L698.0 652.8L698.5 652.1L699.0 652.1L699.5 653.4L700.0 652.8L700.5 652.8L701.0 653.2L701.5 653.1L702.0 653.0L702.5 652.3L703.0 652.9L703.5 653.3L704.0 653.1L704.5 652.7L705.0 652.5L705.5 653.0L706.0 652.3L706.5 653.0L707.0 652.3L707.5 652.4L708.0 653.0L708.5 652.1L709.0 652.6L709.5 652.3L710.0 652.2L710.5 652.1L711.0 652.3L711.5 652.9L712.0 651.6L712.5 651.3L713.0 651.8L713.5 651.4L714.0 651.5L714.5 649.9L715.0 649.4L715.5 648.5L716.0 645.0L716.5 640.9L717.0 638.2L717.5 636.4L718.0 640.1L718.5 643.6L719.0 644.0L719.5 644.1L720.0 643.0L720.5 645.1L721.0 648.2L721.5 649.2L722.0 649.4L722.5 650.2L723.0 649.9L723.5 648.8L724.0 648.6L724.5 647.7L725.0 647.1L725.5 647.3L726.0 649.3L726.5 650.6L727.0 650.3L727.5 651.2L728.0 652.0L728.5 651.3L729.0 651.4L729.5 652.1L730.0 651.5L730.5 651.8L731.0 651.9L731.5 652.7L732.0 653.2L732.5 652.2L733.0 652.1L733.5 652.7L734.0 652.5L734.5 652.4L735.0 652.9L735.5 652.2L736.0 652.4L736.5 652.7L737.0 653.1L737.5 652.4L738.0 652.7L738.5 652.1L739.0 652.9L739.5 652.6L740.0 652.8L740.5 652.4L741.0 652.1L741.5 652.8L742.0 652.7L742.5 651.9L743.0 652.1L743.5 651.3L744.0 651.4L744.5 650.9L745.0 649.5L745.5 648.1L746.0 647.5L746.5 647.8L747.0 648.3L747.5 649.7L748.0 650.3L748.5 650.9L749.0 650.4L749.5 652.1L750.0 651.0L750.5 651.9L751.0 652.0L751.5 652.4L752.0 651.3L752.5 652.5L753.0 651.9L753.5 652.0L754.0 652.4L754.5 652.3L755.0 651.0L755.5 651.3L756.0 651.2L756.5 650.8L757.0 651.9L757.5 650.7L758.0 650.3L758.5 650.8L759.0 649.8L759.5 648.2L760.0 648.0L760.5 645.3L761.0 642.8L761.5 636.1L762.0 628.0L762.5 617.7L763.0 614.2L763.5 619.4L764.0 627.8L764.5 633.1L765.0 633.6L765.5 631.9L766.0 630.4L766.5 634.7L767.0 639.6L767.5 643.9L768.0 647.1L768.5 649.3L769.0 650.2L769.5 650.1L770.0 651.2L770.5 650.7L771.0 651.3L771.5 650.8L772.0 651.2L772.5 651.5L773.0 652.2L773.5 652.8L774.0 652.0L774.5 651.8L775.0 651.6L775.5 652.8L776.0 652.9L776.5 651.6L777.0 652.0L777.5 652.4L778.0 652.1L778.5 653.0L779.0 652.4L779.5 652.2L780.0 652.3L780.5 653.1L781.0 653.1L781.5 652.3L782.0 651.9L782.5 653.1L783.0 653.3L783.5 653.2L784.0 652.1L784.5 652.7L785.0 652.6L785.5 651.8L786.0 652.4L786.5 653.0L787.0 652.3L787.5 653.4L788.0 652.9L788.5 652.2L789.0 653.1L789.5 653.3L790.0 652.5L790.5 652.8L791.0 651.8L791.5 653.2L792.0 652.0L792.5 652.7L793.0 652.0L793.5 652.6L794.0 652.2L794.5 652.7L795.0 652.8L795.5 652.4L796.0 651.8L796.5 652.5L797.0 652.7L797.5 652.3L798.0 652.8L798.5 652.3L799.0 651.8L799.5 651.7L800.0 651.5L800.5 651.8L801.0 652.0L801.5 651.7L802.0 650.8L802.5 650.4L803.0 649.0L803.5 648.1L804.0 644.9L804.5 640.7L805.0 633.3L805.5 623.6L806.0 618.2L806.5 623.2L807.0 632.0L807.5 638.0L808.0 638.6L808.5 637.5L809.0 634.7L809.5 631.6L810.0 635.2L810.5 640.2L811.0 644.7L811.5 647.9L812.0 648.1L812.5 650.3L813.0 650.6L813.5 649.9L814.0 651.6L814.5 651.1L815.0 651.2L815.5 651.5L816.0 650.2L816.5 650.5L817.0 650.3L817.5 648.5L818.0 648.7L818.5 648.1L819.0 648.8L819.5 649.4L820.0 650.9L820.5 649.6L821.0 649.4L821.5 648.1L822.0 647.7L822.5 648.3L823.0 649.7L823.5 649.7L824.0 650.9L824.5 649.3L825.0 650.1L825.5 647.7L826.0 648.4L826.5 649.1L827.0 649.0L827.5 650.0L828.0 649.8L828.5 649.9L829.0 648.9L829.5 648.7L830.0 647.1L830.5 647.8L831.0 648.0L831.5 650.1L832.0 650.0L832.5 648.9L833.0 648.4L833.5 649.6L834.0 649.9L834.5 650.8L835.0 651.6L835.5 651.8L836.0 651.9L836.5 652.9L837.0 652.6L837.5 652.0L838.0 652.8L838.5 652.5L839.0 652.9L839.5 652.8L840.0 652.3L840.5 652.2L841.0 651.9L841.5 652.7L842.0 653.1L842.5 652.9L843.0 653.4L843.5 653.1L844.0 652.6L844.5 652.5L845.0 653.1L845.5 653.2L846.0 653.4L846.5 653.2L847.0 652.7L847.5 653.1L848.0 652.1L848.5 652.6L849.0 653.0L849.5 652.9L850.0 653.5L850.5 652.4L851.0 652.3L851.5 653.0L852.0 652.4L852.5 653.1L853.0 653.2L853.5 653.2L854.0 653.2L854.5 652.6L855.0 652.5L855.5 652.4L856.0 653.4L856.5 652.3L857.0 652.8L857.5 653.0L858.0 652.8L858.5 652.9L859.0 653.2L859.5 652.9L860.0 652.5L860.5 652.4L861.0 652.1L861.5 653.2L862.0 652.1L862.5 652.3L863.0 652.4L863.5 652.0L864.0 653.3L864.5 652.3L865.0 652.1L865.5 653.3L866.0 652.6L866.5 652.0L867.0 653.0L867.5 652.1L868.0 652.0L868.5 652.8L869.0 653.2L869.5 653.1L870.0 652.1L870.5 652.7L871.0 652.9L871.5 652.6L872.0 651.8L872.5 652.8L873.0 653.1L873.5 651.4L874.0 652.2L874.5 651.8L875.0 650.1L875.5 649.8L876.0 647.9L876.5 644.4L877.0 645.7L877.5 648.2L878.0 649.1L878.5 651.4L879.0 650.9L879.5 652.1L880.0 652.3L880.5 652.5L881.0 652.1L881.5 652.0L882.0 652.3L882.5 652.0L883.0 652.3L883.5 651.2L884.0 650.8L884.5 650.6L885.0 649.8L885.5 650.0L886.0 648.4L886.5 647.3L887.0 647.0L887.5 646.3L888.0 647.4L888.5 648.1L889.0 648.9L889.5 649.4L890.0 648.9L890.5 650.1L891.0 649.7L891.5 651.5L892.0 651.9L892.5 651.2L893.0 652.6L893.5 651.5L894.0 652.6L894.5 652.1L895.0 653.0L895.5 651.8L896.0 652.6L896.5 652.7L897.0 652.2L897.5 652.3L898.0 652.8L898.5 653.0L899.0 652.2L899.5 653.1L900.0 651.6L900.5 652.3L901.0 652.4L901.5 651.8L902.0 651.6L902.5 650.3L903.0 648.7L903.5 647.7L904.0 648.0L904.5 649.2L905.0 650.0L905.5 650.1L906.0 650.9L906.5 650.1L907.0 649.8L907.5 649.5L908.0 648.9L908.5 648.4L909.0 650.1L909.5 651.1L910.0 651.5L910.5 651.3L911.0 652.2L911.5 652.3L912.0 652.4L912.5 653.0L913.0 652.1L913.5 652.2L914.0 652.1L914.5 652.2L915.0 652.0L915.5 651.5L916.0 652.2L916.5 650.6L917.0 651.6L917.5 649.6L918.0 649.3L918.5 645.9L919.0 643.3L919.5 640.9L920.0 641.3L920.5 643.9L921.0 646.2L921.5 647.1L922.0 646.6L922.5 647.0L923.0 645.9L923.5 647.4L924.0 648.1L924.5 650.0L925.0 650.4L925.5 650.9L926.0 650.9L926.5 651.6L927.0 651.4L927.5 652.0L928.0 652.8L928.5 651.6L929.0 652.9L929.5 652.9L930.0 651.7L930.5 652.6L931.0 652.0L931.5 653.0L932.0 652.7L932.5 651.9L933.0 652.9L933.5 652.1L934.0 651.4L934.5 652.5L935.0 651.6L935.5 651.5L936.0 651.6L936.5 651.2L937.0 651.1L937.5 651.9L938.0 651.2L938.5 650.1L939.0 648.5L939.5 648.0L940.0 644.1L940.5 639.3L941.0 631.6L941.5 631.0L942.0 636.5L942.5 641.5L943.0 644.8L943.5 643.7L944.0 641.8L944.5 640.3L945.0 642.6L945.5 644.5L946.0 645.2L946.5 642.9L947.0 640.5L947.5 635.0L948.0 627.3L948.5 621.5L949.0 623.8L949.5 629.8L950.0 633.4L950.5 634.2L951.0 632.4L951.5 628.3L952.0 624.8L952.5 628.5L953.0 634.6L953.5 639.9L954.0 642.2L954.5 644.4L955.0 645.0L955.5 644.9L956.0 644.5L956.5 645.2L957.0 647.1L957.5 647.6L958.0 649.2L958.5 650.3L959.0 650.5L959.5 651.0L960.0 651.2L960.5 651.6L961.0 651.7L961.5 651.9L962.0 651.5L962.5 652.6L963.0 651.7L963.5 652.6L964.0 651.7L964.5 653.0L965.0 652.4L965.5 652.5L966.0 652.1L966.5 652.9L967.0 652.9L967.5 653.1L968.0 652.4L968.5 652.4L969.0 653.4L969.5 653.1L970.0 653.1L970.5 651.9L971.0 652.7L971.5 652.5L972.0 653.0L972.5 652.4L973.0 652.2L973.5 652.4L974.0 653.5L974.5 652.8L975.0 652.7L975.5 653.4L976.0 652.2L976.5 653.0L977.0 653.1L977.5 652.5L978.0 652.6L978.5 652.7L979.0 652.2L979.5 652.7L980.0 653.0L980.5 653.5L981.0 652.7L981.5 653.0" fill="none" stroke="#e6e6e6" stroke-width="1.150" stroke-linejoin="round" clip-path="url(#cpm)"/><path d="M516 649.500v6" stroke="#e02020" stroke-width="1"/></svg>
<svg style="left:0.0px;top:0.0px" width="1080" height="690" viewBox="0 0 1080 690"><path d="M113.0 158.7L114.0 158.6L115.0 158.5L116.0 158.4L117.0 158.5L118.0 158.3L119.0 158.7L120.0 158.3L121.0 157.9L122.0 157.6L123.0 156.7L124.0 154.9L125.0 149.5L126.0 144.2L127.0 149.4L128.0 154.7L129.0 157.1L130.0 157.8L131.0 158.2L132.0 158.1L133.0 158.3L134.0 158.7L135.0 158.4L136.0 158.8L137.0 158.6L138.0 158.9L139.0 159.0L140.0 158.5L141.0 158.9L142.0 158.9L143.0 158.5L144.0 158.6L145.0 158.9L146.0 158.5L147.0 158.8L148.0 158.7L149.0 158.9L150.0 158.6L151.0 158.7L152.0 158.5L153.0 158.6L154.0 158.9L155.0 158.8L156.0 158.9L157.0 158.9L158.0 158.9L159.0 158.8L160.0 158.6L161.0 158.8L162.0 158.2L163.0 157.9L164.0 157.4L165.0 157.3L166.0 158.1L167.0 158.5L168.0 158.6L169.0 158.6L170.0 158.9L171.0 158.5L172.0 159.0L173.0 158.6L174.0 158.6L175.0 159.0L176.0 158.6L177.0 158.8L178.0 158.7L179.0 159.0L180.0 159.0L181.0 158.9L182.0 158.5L183.0 158.9L184.0 158.6L185.0 158.5L186.0 158.5L187.0 158.8L188.0 158.8L189.0 158.7L190.0 158.6L191.0 158.9L192.0 158.6L193.0 158.6L194.0 158.5L195.0 158.9L196.0 158.4L197.0 158.9L198.0 158.7L199.0 158.6L200.0 158.4L201.0 158.6L202.0 158.3L203.0 158.4L204.0 158.3L205.0 158.0L206.0 157.3L207.0 155.9L208.0 155.4L209.0 156.4L210.0 157.3L211.0 158.1L212.0 158.3L213.0 157.8L214.0 158.0L215.0 158.0L216.0 158.0L217.0 157.6L218.0 157.3L219.0 157.2L220.0 156.7L221.0 156.3L222.0 154.8L223.0 153.3L224.0 149.3L225.0 141.0L226.0 126.8L227.0 112.5L228.0 119.6L229.0 136.1L230.0 146.6L231.0 152.1L232.0 154.4L233.0 155.8L234.0 156.3L235.0 157.1L236.0 157.4L237.0 157.4L238.0 157.6L239.0 157.7L240.0 158.1L241.0 158.1L242.0 158.1L243.0 158.2L244.0 158.2L245.0 158.1L246.0 158.4L247.0 158.4L248.0 158.2L249.0 158.2L250.0 158.4L251.0 158.5L252.0 158.6L253.0 158.6L254.0 158.5L255.0 158.0L256.0 158.0L257.0 158.4L258.0 158.3L259.0 158.3L260.0 158.4L261.0 158.4L262.0 158.3L263.0 158.4L264.0 158.2L265.0 158.3L266.0 158.1L267.0 157.8L268.0 157.6L269.0 157.4L270.0 156.5L271.0 155.5L272.0 152.9L273.0 146.0L274.0 130.1L275.0 124.1L276.0 140.4L277.0 150.9L278.0 154.6L279.0 156.2L280.0 157.0L281.0 157.7L282.0 157.8L283.0 158.0L284.0 158.0L285.0 158.4L286.0 158.2L287.0 158.2L288.0 158.4L289.0 158.3L290.0 158.3L291.0 158.5L292.0 158.5L293.0 158.7L294.0 158.3L295.0 158.2L296.0 158.4L297.0 158.1L298.0 157.8L299.0 157.2L300.0 155.9L301.0 152.4L302.0 151.4L303.0 154.6L304.0 156.9L305.0 157.7L306.0 158.0L307.0 158.3L308.0 158.4L309.0 158.8L310.0 158.8L311.0 158.7L312.0 158.6L313.0 158.8L314.0 158.6L315.0 158.7L316.0 159.0L317.0 158.8L318.0 158.9L319.0 159.0L320.0 159.0L321.0 158.9L322.0 158.9L323.0 158.9L324.0 159.0L325.0 158.8L326.0 158.8L327.0 158.7L328.0 158.7L329.0 158.9L330.0 158.6L331.0 159.0L332.0 158.8L333.0 158.9L334.0 158.8L335.0 159.0L336.0 158.6L337.0 158.9L338.0 159.0L339.0 158.7L340.0 159.0L341.0 158.8L342.0 158.9L343.0 158.7L344.0 158.5L345.0 158.5L346.0 158.5L347.0 158.1L348.0 158.4L349.0 158.7L350.0 158.9L351.0 158.7L352.0 158.7L353.0 158.5L354.0 158.5L355.0 158.7L356.0 158.9L357.0 158.6L358.0 159.0L359.0 159.0L360.0 158.7L361.0 158.7L362.0 158.9L363.0 158.7L364.0 158.5L365.0 158.8L366.0 158.7L367.0 158.8L368.0 158.7L369.0 158.3L370.0 158.5L371.0 158.0L372.0 157.6L373.0 156.6L374.0 154.1L375.0 152.7L376.0 155.7L377.0 157.5L378.0 158.2L379.0 158.1L380.0 158.5L381.0 158.7L382.0 158.6L383.0 158.8L384.0 158.5L385.0 158.5L386.0 158.5L387.0 157.8L388.0 156.8L389.0 156.8L390.0 157.6L391.0 158.3L392.0 158.2L393.0 158.3L394.0 158.5L395.0 158.4L396.0 158.0L397.0 156.5L398.0 154.5L399.0 153.4L400.0 156.0L401.0 157.5L402.0 158.1L403.0 158.3L404.0 158.7L405.0 158.5L406.0 158.7L407.0 158.7L408.0 158.8L409.0 158.8L410.0 158.7L411.0 158.6L412.0 158.6L413.0 158.3L414.0 158.4L415.0 158.8L416.0 158.7L417.0 158.5L418.0 157.9L419.0 157.1L420.0 156.4L421.0 157.5L422.0 158.0L423.0 158.5L424.0 158.6L425.0 158.6L426.0 158.6L427.0 158.7L428.0 158.5L429.0 158.8L430.0 158.8L431.0 158.6L432.0 158.9L433.0 158.9L434.0 158.6L435.0 159.0L436.0 158.6L437.0 158.6L438.0 158.8L439.0 158.8L440.0 158.5L441.0 158.5L442.0 158.8L443.0 158.6L444.0 158.4L445.0 158.3L446.0 158.0L447.0 157.3L448.0 155.2L449.0 152.8L450.0 153.9L451.0 156.3L452.0 157.4L453.0 157.9L454.0 158.3L455.0 158.7L456.0 158.4L457.0 158.3L458.0 158.3L459.0 158.5L460.0 158.8L461.0 158.2L462.0 158.2L463.0 157.2L464.0 156.4L465.0 157.0L466.0 157.6L467.0 157.8L468.0 158.1L469.0 158.7L470.0 158.5L471.0 158.7L472.0 158.8L473.0 158.6L474.0 158.8L475.0 158.7L476.0 158.4L477.0 158.3L478.0 158.0L479.0 157.8L480.0 158.1L481.0 158.3L482.0 158.8L483.0 158.7L484.0 158.8L485.0 158.7L486.0 158.7L487.0 158.5L488.0 158.8L489.0 159.0L490.0 158.7L491.0 158.9L492.0 158.7L493.0 158.7L494.0 158.5L495.0 158.7L496.0 158.6L497.0 158.7L498.0 158.5L499.0 158.4L500.0 157.6L501.0 155.9L502.0 155.2L503.0 156.6L504.0 156.7L505.0 157.5L506.0 158.4L507.0 158.3L508.0 158.4L509.0 158.7L510.0 158.3L511.0 158.4L512.0 157.8L513.0 156.2L514.0 154.6L515.0 155.2L516.0 155.1L517.0 152.7L518.0 153.8L519.0 157.0L520.0 157.7L521.0 158.5L522.0 158.6L523.0 158.3L524.0 158.5L525.0 158.8L526.0 158.9L527.0 158.5L528.0 158.7L529.0 158.6L530.0 158.9L531.0 158.7L532.0 158.8L533.0 158.9L534.0 158.9L535.0 158.7L536.0 158.9L537.0 158.8L538.0 159.0L539.0 158.6L540.0 158.7L541.0 158.6L542.0 158.8L543.0 158.5L544.0 158.4L545.0 158.1L546.0 158.4L547.0 158.5L548.0 158.8L549.0 158.9L550.0 159.0L551.0 158.9L552.0 159.0L553.0 158.5L554.0 158.7L555.0 158.5L556.0 158.8L557.0 158.3L558.0 157.4L559.0 156.2L560.0 156.6L561.0 157.2L562.0 157.8L563.0 158.5L564.0 158.7L565.0 158.7L566.0 158.8L567.0 158.5L568.0 158.9L569.0 158.9L570.0 158.9L571.0 158.9L572.0 158.9L573.0 158.9L574.0 158.8L575.0 159.0L576.0 158.5L577.0 158.8L578.0 158.5L579.0 158.6L580.0 158.5L581.0 158.4L582.0 157.8L583.0 157.7L584.0 157.5L585.0 158.1L586.0 157.9L587.0 157.5L588.0 156.4L589.0 154.2L590.0 154.8L591.0 155.8L592.0 156.8L593.0 157.9L594.0 158.1L595.0 158.5L596.0 158.7L597.0 158.6L598.0 158.7L599.0 158.5L600.0 158.5L601.0 158.7L602.0 158.6L603.0 158.3L604.0 157.8L605.0 157.1L606.0 155.2L607.0 154.1L608.0 156.0L609.0 156.4L610.0 157.3L611.0 158.3L612.0 158.7L613.0 158.6L614.0 158.4L615.0 158.7L616.0 158.8L617.0 158.9L618.0 158.9L619.0 158.5L620.0 158.7L621.0 158.5L622.0 159.0L623.0 158.9L624.0 159.0L625.0 158.8L626.0 158.9L627.0 158.8L628.0 158.7L629.0 158.7L630.0 158.8L631.0 158.7L632.0 158.0L633.0 158.0L634.0 156.6L635.0 152.7L636.0 149.9L637.0 153.2L638.0 154.9L639.0 157.3L640.0 157.8L641.0 157.6L642.0 157.5L643.0 157.3L644.0 158.1L645.0 158.5L646.0 158.4L647.0 158.5L648.0 158.4L649.0 158.2L650.0 157.8L651.0 157.6L652.0 157.9L653.0 158.5L654.0 158.6L655.0 158.5L656.0 158.8L657.0 158.9L658.0 158.8L659.0 159.0L660.0 158.6L661.0 158.6L662.0 158.9L663.0 159.0L664.0 159.0L665.0 158.9L666.0 159.0L667.0 158.8L668.0 158.7L669.0 158.9L670.0 158.9L671.0 158.6L672.0 158.9L673.0 158.7L674.0 158.5L675.0 157.9L676.0 156.7L677.0 155.8L678.0 156.8L679.0 156.8L680.0 157.7L681.0 158.1L682.0 158.5L683.0 158.5L684.0 158.7L685.0 158.8L686.0 158.6L687.0 158.7L688.0 158.6L689.0 158.7L690.0 158.7L691.0 158.9L692.0 158.6L693.0 158.9L694.0 159.0L695.0 159.0L696.0 159.0L697.0 158.9L698.0 158.7L699.0 158.9L700.0 159.0L701.0 158.7L702.0 158.8L703.0 159.0L704.0 159.0L705.0 159.0L706.0 158.9L707.0 158.6L708.0 158.6L709.0 158.7L710.0 158.9L711.0 158.8L712.0 158.8L713.0 158.7L714.0 158.8L715.0 158.3L716.0 157.4L717.0 156.2L718.0 156.9L719.0 157.4L720.0 157.4L721.0 157.9L722.0 158.4L723.0 158.1L724.0 158.0L725.0 158.1L726.0 158.3L727.0 158.3L728.0 158.7L729.0 158.7L730.0 158.8L731.0 158.6L732.0 158.6L733.0 158.8L734.0 158.5L735.0 158.7L736.0 159.0L737.0 158.6L738.0 158.8L739.0 159.0L740.0 158.5L741.0 159.0L742.0 158.7L743.0 158.6L744.0 158.3L745.0 158.3L746.0 158.2L747.0 158.2L748.0 158.5L749.0 158.5L750.0 158.7L751.0 158.6L752.0 158.8L753.0 158.8L754.0 158.8L755.0 158.4L756.0 158.5L757.0 158.4L758.0 158.4L759.0 158.4L760.0 158.2L761.0 156.9L762.0 154.6L763.0 152.5L764.0 154.8L765.0 155.8L766.0 155.0L767.0 156.4L768.0 158.0L769.0 158.2L770.0 158.6L771.0 158.5L772.0 158.5L773.0 158.6L774.0 158.6L775.0 158.8L776.0 159.0L777.0 158.8L778.0 158.7L779.0 158.9L780.0 158.8L781.0 158.9L782.0 159.0L783.0 158.9L784.0 158.9L785.0 158.8L786.0 158.7L787.0 158.8L788.0 158.6L789.0 158.6L790.0 158.6L791.0 158.7L792.0 158.7L793.0 158.8L794.0 158.6L795.0 158.8L796.0 158.7L797.0 158.7L798.0 158.7L799.0 158.8L800.0 158.9L801.0 158.8L802.0 158.5L803.0 158.2L804.0 157.4L805.0 155.5L806.0 153.1L807.0 155.0L808.0 156.6L809.0 155.5L810.0 156.1L811.0 157.3L812.0 158.1L813.0 158.2L814.0 158.3L815.0 158.5L816.0 158.3L817.0 158.2L818.0 157.9L819.0 158.4L820.0 158.4L821.0 158.0L822.0 158.1L823.0 158.0L824.0 158.4L825.0 158.3L826.0 158.3L827.0 158.3L828.0 158.6L829.0 158.1L830.0 157.7L831.0 157.9L832.0 158.2L833.0 158.3L834.0 158.6L835.0 158.5L836.0 158.7L837.0 158.6L838.0 158.8L839.0 158.6L840.0 158.9L841.0 158.9L842.0 158.9L843.0 158.8L844.0 158.6L845.0 159.0L846.0 158.8L847.0 158.7L848.0 159.0L849.0 159.0L850.0 158.8L851.0 158.7L852.0 158.6L853.0 158.7L854.0 158.9L855.0 158.9L856.0 158.8L857.0 158.6L858.0 158.9L859.0 158.9L860.0 158.8L861.0 158.6L862.0 159.0L863.0 159.1L864.0 159.0L865.0 158.8L866.0 158.8L867.0 159.0L868.0 159.0L869.0 158.8L870.0 158.7L871.0 158.7L872.0 158.7L873.0 159.0L874.0 158.7L875.0 158.3L876.0 157.7L877.0 157.7L878.0 158.1L879.0 158.6L880.0 158.5L881.0 158.9L882.0 158.6L883.0 158.5L884.0 158.6L885.0 158.6L886.0 158.2L887.0 157.9L888.0 158.2L889.0 158.4L890.0 158.1L891.0 158.6L892.0 158.5L893.0 158.6L894.0 158.6L895.0 158.6L896.0 158.7L897.0 158.6L898.0 158.5L899.0 158.7L900.0 158.5L901.0 158.9L902.0 158.7L903.0 158.4L904.0 158.1L905.0 158.4L906.0 158.5L907.0 158.2L908.0 158.0L909.0 158.6L910.0 158.7L911.0 158.7L912.0 158.8L913.0 158.9L914.0 158.7L915.0 158.8L916.0 158.6L917.0 158.5L918.0 157.9L919.0 156.9L920.0 157.1L921.0 157.7L922.0 157.8L923.0 157.7L924.0 158.3L925.0 158.5L926.0 158.7L927.0 158.6L928.0 158.5L929.0 158.8L930.0 158.8L931.0 158.7L932.0 158.6L933.0 158.6L934.0 158.7L935.0 158.8L936.0 158.7L937.0 158.4L938.0 158.5L939.0 158.5L940.0 157.4L941.0 155.4L942.0 156.0L943.0 157.6L944.0 157.2L945.0 157.2L946.0 157.5L947.0 156.5L948.0 154.5L949.0 153.9L950.0 155.4L951.0 155.5L952.0 154.3L953.0 155.6L954.0 157.4L955.0 157.3L956.0 157.5L957.0 158.1L958.0 158.4L959.0 158.5L960.0 158.7L961.0 158.7L962.0 158.9L963.0 158.9L964.0 158.5L965.0 158.8L966.0 158.8L967.0 159.0L968.0 158.9L969.0 158.6L970.0 158.7L971.0 158.8L972.0 159.0L973.0 158.9L974.0 158.7L975.0 158.9L976.0 158.8L977.0 158.6L978.0 158.8L979.0 158.8L980.0 159.1L981.0 159.1" fill="none" stroke="#f0f0f0" stroke-width="1" clip-path="url(#cpu)"/><path d="M112.300 159.200h869.700" stroke="#e8e8e8" stroke-width="1.200"/></svg>
<div class="" style="left:112.3px;top:159.5px;width:869.7px;height:19.8px;background:#fff;border-top:2px solid #a4a4a4;"></div>
<div class="" style="left:112.3px;top:161.5px;width:20.0px;height:18.0px;background:linear-gradient(90deg,#fff 0,#fff 2px,#9a9a9a 2.500px,#e8e8e8 4px,#e0e0e0 100%);"></div>
<div class="" style="left:116.0px;top:161.5px;width:15.0px;height:17.5px;background:linear-gradient(180deg,#f4f4f4,#d0d0d0);border-bottom:1px solid #808080;"></div>
<svg style="left:122.0px;top:165.0px" width="7" height="11" viewBox="0 0 7 11"><path d="M0.500 0.500v9l2.200-2 1.500 3.200 1.300-.6-1.500-3.100h3z" fill="#fff" stroke="#000" stroke-width=".9"/></svg>
<div class="" style="left:797.0px;top:161.5px;width:185.0px;height:17.8px;background:#ececec;border-bottom:2px solid #a6a6a6;"></div>
<div class="btn" style="left:797.7px;top:162.5px;width:14.9px;height:14.6px;"></div>
<svg style="left:797.7px;top:162.5px" width="15" height="15" viewBox="0 0 15 16"><text x="7.500" y="11.500" font-family="Liberation Sans,sans-serif" font-size="9.500" fill="#101010" text-anchor="middle">%</text></svg>
<div class="btn" style="left:812.9px;top:162.5px;width:14.9px;height:14.6px;"></div>
<svg style="left:812.9px;top:162.5px" width="15" height="15" viewBox="0 0 15 16"><text x="7.500" y="11.500" font-family="Liberation Sans,sans-serif" font-size="10" fill="#b8b8b8" text-anchor="middle">?</text></svg>
<div class="btn" style="left:828.2px;top:162.5px;width:14.9px;height:14.6px;"></div>
<svg style="left:828.2px;top:162.5px" width="15" height="15" viewBox="0 0 15 16"><text x="7.500" y="10" font-family="Liberation Sans,sans-serif" font-size="8" fill="#b8b8b8" text-anchor="middle">...</text></svg>
<div class="btn" style="left:843.4px;top:162.5px;width:14.9px;height:14.6px;"></div>
<svg style="left:843.4px;top:162.5px" width="15" height="15" viewBox="0 0 15 16"><path d="M6 4v8M9 4v8" stroke="#a8a8a8" stroke-width="1.100"/></svg>
<div class="btn" style="left:858.6px;top:162.5px;width:14.9px;height:14.6px;"></div>
<svg style="left:858.6px;top:162.5px" width="15" height="15" viewBox="0 0 15 16"><path d="M4 8l2.500 2.500 4.500-5.500" fill="none" stroke="#a8a8a8" stroke-width="1.400"/></svg>
<div class="btn" style="left:873.9px;top:162.5px;width:14.9px;height:14.6px;"></div>
<svg style="left:873.9px;top:162.5px" width="15" height="15" viewBox="0 0 15 16"><path d="M4 5l3 3-3 3zM8 5l3 3-3 3z" fill="#a8a8a8"/></svg>
<div class="btn" style="left:889.1px;top:162.5px;width:14.9px;height:14.6px;"></div>
<svg style="left:889.1px;top:162.5px" width="15" height="15" viewBox="0 0 15 16"><path d="M6.500 6v4l-2.500-2zM8.500 6v4l2.500-2z" fill="#a8a8a8"/></svg>
<div class="btn" style="left:904.3px;top:162.5px;width:14.9px;height:14.6px;"></div>
<svg style="left:904.3px;top:162.5px" width="15" height="15" viewBox="0 0 15 16"><path d="M7.500 4l1.800 2.500h-3.600zM7.500 12l1.800-2.500h-3.600z" fill="#606060"/><path d="M7.500 5v6" stroke="#606060" stroke-width=".9"/></svg>
<div class="btn" style="left:919.5px;top:162.5px;width:14.9px;height:14.6px;"></div>
<svg style="left:919.5px;top:162.5px" width="15" height="15" viewBox="0 0 15 16"><path d="M7.500 4l2.500 3h-5zM7.500 12l2.500-3h-5z" fill="#b0b0b0"/></svg>
<div class="btn" style="left:934.8px;top:162.5px;width:14.9px;height:14.6px;"></div>
<svg style="left:934.8px;top:162.5px" width="15" height="15" viewBox="0 0 15 16"><rect x="4" y="3.500" width="7" height="9" fill="none" stroke="#a8a8a8"/><path d="M5.500 6h4M5.500 8h4M5.500 10h4M7.500 4v8" stroke="#b8b8b8" stroke-width=".8"/></svg>
<div class="btn" style="left:950.0px;top:162.5px;width:14.9px;height:14.6px;"></div>
<svg style="left:950.0px;top:162.5px" width="15" height="15" viewBox="0 0 15 16"><path d="M4.500 5l6 6M10.500 5l-6 6" stroke="#a8a8a8" stroke-width="1.200"/></svg>
<div class="btn" style="left:965.2px;top:162.5px;width:14.9px;height:14.6px;"></div>
<svg style="left:965.2px;top:162.5px" width="15" height="15" viewBox="0 0 15 16"><path d="M4 6.500h7l-3.500 4z" fill="#a0a0a0"/></svg>
<div class="" style="left:516.3px;top:180.4px;width:1.0px;height:4.8px;background:#d8d820;"></div>
<svg style="left:0.0px;top:0.0px" width="1080" height="690" viewBox="0 0 1080 690"><defs><clipPath id="cps"><rect x="499" y="180" width="483" height="200"/></clipPath></defs><g clip-path="url(#cps)"><path d="M478.9 274.0A68.2 68.2 0 0 1 615.3 274.0" fill="none" stroke="#108070" stroke-width="1"/><path d="M478.9 274.0H615.3" stroke="#108070" stroke-width="1"/><path d="M547.1 274.0L611.2 250.7A68.2 68.2 0 0 0 570.4 209.9Z" fill="#860086" stroke="#108070" stroke-width=".8"/><circle cx="547.1" cy="274.0" r="1.800" fill="#c838c8"/></g></svg>
<div class="t " style="left:503.5px;transform-origin:0 50%;top:261.7px;font-size:10px;line-height:12px;color:#a414a4;transform:scaleX(0.86);">&lt;Cu&gt;</div>
<div class="" style="left:982.3px;top:197.0px;width:9.7px;height:12.0px;background:#d8d8e0;border:1px solid;border-color:#f4f4f4 #505050 #505050 #f4f4f4;"></div>
<svg style="left:982.3px;top:197.0px" width="9.7" height="12" viewBox="0 0 9.7 12"><text x="4.600" y="9" font-family="Liberation Sans,sans-serif" font-size="8" font-weight="bold" fill="#2828d0" text-anchor="middle">Z</text></svg>
<div class="" style="left:982.3px;top:214.0px;width:9.7px;height:12.0px;background:#d8d8e0;border:1px solid;border-color:#f4f4f4 #505050 #505050 #f4f4f4;"></div>
<svg style="left:982.3px;top:214.0px" width="9.7" height="12" viewBox="0 0 9.7 12"><text x="4.600" y="9" font-family="Liberation Sans,sans-serif" font-size="8" font-weight="bold" fill="#2828d0" text-anchor="middle">C</text></svg>
<div class="" style="left:982.3px;top:231.0px;width:9.7px;height:12.0px;background:#d8d8e0;border:1px solid;border-color:#f4f4f4 #505050 #505050 #f4f4f4;"></div>
<svg style="left:982.3px;top:231.0px" width="9.7" height="12" viewBox="0 0 9.7 12"><text x="4.600" y="5.800" font-family="Liberation Sans,sans-serif" font-size="6" font-weight="bold" fill="#a020a0" text-anchor="middle">x</text><text x="4.600" y="10.600" font-family="Liberation Sans,sans-serif" font-size="6" font-weight="bold" fill="#a020a0" text-anchor="middle">x</text></svg>
<div class="" style="left:982.3px;top:511.6px;width:17.5px;height:14.4px;background:#ececec;border:1px solid;border-color:#fff #707070 #707070 #fff;"></div>
<svg style="left:983.5px;top:511.6px" width="15" height="14" viewBox="0 0 15 14"><g transform="translate(7.500 7) scale(.9) translate(-7.500 -7.200)"><path d="M2.500 9.500h10" stroke="#404040" stroke-width="1"/><path d="M4 9v-3M7.500 9v-5M11 9v-3" stroke="#d02020" stroke-width="1"/><path d="M2.500 7.500h10" stroke="#d06060" stroke-width=".6"/></g></svg>
<div class="" style="left:982.3px;top:525.9px;width:17.5px;height:14.4px;background:#ececec;border:1px solid;border-color:#fff #707070 #707070 #fff;"></div>
<svg style="left:983.5px;top:525.9px" width="15" height="14" viewBox="0 0 15 14"><g transform="translate(7.500 7) scale(.9) translate(-7.500 -7.200)"><text x="7.500" y="11" font-family="Liberation Sans,sans-serif" font-size="10" fill="#404040" text-anchor="middle">?</text></g></svg>
<div class="" style="left:982.3px;top:540.1px;width:17.5px;height:14.4px;background:#ececec;border:1px solid;border-color:#fff #707070 #707070 #fff;"></div>
<svg style="left:983.5px;top:540.1px" width="15" height="14" viewBox="0 0 15 14"><g transform="translate(7.500 7) scale(.9) translate(-7.500 -7.200)"><path d="M6.500 4.500v5.500l-3.500-2.750zM8.500 4.500v5.500l3.500-2.750z" fill="#2020e0"/><path d="M7.500 2.500v9.500" stroke="#2020e0" stroke-width="1"/></g></svg>
<div class="" style="left:982.3px;top:554.4px;width:17.5px;height:14.4px;background:#ececec;border:1px solid;border-color:#fff #707070 #707070 #fff;"></div>
<svg style="left:983.5px;top:554.4px" width="15" height="14" viewBox="0 0 15 14"><g transform="translate(7.500 7) scale(.9) translate(-7.500 -7.200)"><path d="M5.500 3l1.800 2.500h-3.600zM9.500 3l1.800 2.500h-3.600z" fill="#2020e0"/><path d="M5.500 5v5.500M9.500 5v5.500M3.500 11.500h8" stroke="#2020e0" stroke-width="1.100"/></g></svg>
<div class="" style="left:982.3px;top:568.6px;width:17.5px;height:14.4px;background:#ececec;border:1px solid;border-color:#fff #707070 #707070 #fff;"></div>
<svg style="left:983.5px;top:568.6px" width="15" height="14" viewBox="0 0 15 14"><g transform="translate(7.500 7) scale(.9) translate(-7.500 -7.200)"><path d="M4 7l3.500-3 3.500 3M4 10.500l3.500-3 3.500 3" fill="none" stroke="#c040f0" stroke-width="1.200"/></g></svg>
<div class="" style="left:982.3px;top:582.9px;width:17.5px;height:14.4px;background:#ececec;border:1px solid;border-color:#fff #707070 #707070 #fff;"></div>
<svg style="left:983.5px;top:582.9px" width="15" height="14" viewBox="0 0 15 14"><g transform="translate(7.500 7) scale(.9) translate(-7.500 -7.200)"><path d="M4 3.500h7M7.500 5v6.500M7.500 5l2.200 2.500h-4.400z" stroke="#101010" stroke-width="1.100" fill="#101010"/></g></svg>
<div class="" style="left:982.3px;top:597.1px;width:17.5px;height:14.4px;background:#ececec;border:1px solid;border-color:#fff #707070 #707070 #fff;"></div>
<svg style="left:983.5px;top:597.1px" width="15" height="14" viewBox="0 0 15 14"><g transform="translate(7.500 7) scale(.9) translate(-7.500 -7.200)"><path d="M7.500 3l2.200 2.800h-4.400zM7.500 11.500l2.200-2.800h-4.400zM7.500 5v5" stroke="#101010" stroke-width="1.100" fill="#101010"/></g></svg>
<div class="" style="left:982.3px;top:611.4px;width:17.5px;height:14.4px;background:#ececec;border:1px solid;border-color:#fff #707070 #707070 #fff;"></div>
<svg style="left:983.5px;top:611.4px" width="15" height="14" viewBox="0 0 15 14"><g transform="translate(7.500 7) scale(.9) translate(-7.500 -7.200)"><path d="M3 7.250l3-2.300v4.600zM12 7.250l-3-2.300v4.600zM5 7.250h5" stroke="#101010" stroke-width="1.100" fill="#101010"/></g></svg>
<div class="" style="left:982.3px;top:625.6px;width:17.5px;height:14.4px;background:#ececec;border:1px solid;border-color:#fff #707070 #707070 #fff;"></div>
<svg style="left:983.5px;top:625.6px" width="15" height="14" viewBox="0 0 15 14"><g transform="translate(7.500 7) scale(.9) translate(-7.500 -7.200)"><path d="M6.500 5v4.500l-3-2.250zM8.500 5v4.500l3-2.250z" fill="#101010"/></g></svg>
<div class="" style="left:982.3px;top:639.9px;width:17.5px;height:14.4px;background:#ececec;border:1px solid;border-color:#fff #707070 #707070 #fff;"></div>
<svg style="left:983.5px;top:639.9px" width="15" height="14" viewBox="0 0 15 14"><g transform="translate(7.500 7) scale(.9) translate(-7.500 -7.200)"><rect x="3.500" y="3" width="8" height="8" fill="none" stroke="#101010" stroke-width="1"/><path d="M7.500 3v8M3.500 7h8" stroke="#101010" stroke-width="1"/></g></svg>
<div class="sunk" style="left:1001.0px;top:85.3px;width:76.5px;height:14.0px;background:#fff;"></div>
<div class="" style="left:1003.0px;top:86.7px;width:44.5px;height:12.0px;overflow:hidden;"><div class="t" style="left:0.500px;top:0;font-size:10px;line-height:12px;color:#101010;transform:scaleX(.93);transform-origin:0 50%">MDI-500 (Corundum)</div></div>
<div class="btn" style="left:1047.8px;top:86.5px;width:14.8px;height:12.0px;"></div>
<svg style="left:1050.5px;top:87.5px" width="10" height="10" viewBox="0 0 10 10"><rect x="2.500" y="2.500" width="6.500" height="7" fill="#e8e8e8" stroke="#303030" stroke-width=".9"/><path d="M4 5h3.500M4 7h3.500M5.800 3.500v5.500" stroke="#505050" stroke-width=".7"/><circle cx="2.300" cy="2.300" r="1.700" fill="#d020d0"/></svg>
<div class="btn" style="left:1063.3px;top:86.5px;width:13.4px;height:12.0px;"></div>
<svg style="left:1066.2px;top:90.6px" width="7.6" height="4.3" viewBox="0 0 7.6 4.3"><path d="M0 0h7.6l-3.8 4.3z" fill="#000"/></svg>
<div class="btn" style="left:1001.7px;top:103.5px;width:61.5px;height:13.7px;"></div>
<svg style="left:1005.0px;top:106.8px" width="7.5" height="7" viewBox="0 0 7.5 7"><path d="M3.200 0v7L0 3.500zM4.300 0v7l3.200-3.500z" fill="#1818e0"/></svg>
<div class="" style="left:1014.5px;top:104.5px;width:48.0px;height:12.0px;overflow:hidden;"><div class="t" style="left:0;top:0;font-size:10.500px;line-height:12px;color:#101010;transform:scaleX(.93);transform-origin:0 50%">500个相按相名</div></div>
<div class="" style="left:1002.0px;top:117.2px;width:61.5px;height:539.5px;background:#fff;border-top:1px solid #909090;overflow:hidden;"></div>
<div style="left:0;top:0;width:1062.300px;height:657px;overflow:hidden;pointer-events:none"><div class="t" style="left:1004.800px;top:119.0px;font-size:10px;line-height:12px;color:#303030;transform:scaleX(.9);transform-origin:0 50%">Abenakiite-(Ce)</div><div class="t" style="left:1004.800px;top:130.9px;font-size:10px;line-height:12px;color:#303030;transform:scaleX(.9);transform-origin:0 50%">Abernathyite</div><div class="t" style="left:1004.800px;top:142.9px;font-size:10px;line-height:12px;color:#303030;transform:scaleX(.9);transform-origin:0 50%">Abhurite</div><div class="t" style="left:1004.800px;top:154.8px;font-size:10px;line-height:12px;color:#303030;transform:scaleX(.9);transform-origin:0 50%">Abswurmbachite</div><div class="t" style="left:1004.800px;top:166.7px;font-size:10px;line-height:12px;color:#303030;transform:scaleX(.9);transform-origin:0 50%">Acanthite</div><div class="t" style="left:1004.800px;top:178.7px;font-size:10px;line-height:12px;color:#303030;transform:scaleX(.9);transform-origin:0 50%">Acetamide</div><div class="t" style="left:1004.800px;top:190.6px;font-size:10px;line-height:12px;color:#303030;transform:scaleX(.9);transform-origin:0 50%">Achavalite</div><div class="t" style="left:1004.800px;top:202.5px;font-size:10px;line-height:12px;color:#303030;transform:scaleX(.9);transform-origin:0 50%">Actinolite</div><div class="t" style="left:1004.800px;top:214.4px;font-size:10px;line-height:12px;color:#303030;transform:scaleX(.9);transform-origin:0 50%">Acuminite</div><div class="t" style="left:1004.800px;top:226.4px;font-size:10px;line-height:12px;color:#303030;transform:scaleX(.9);transform-origin:0 50%">Adamite</div><div class="t" style="left:1004.800px;top:238.3px;font-size:10px;line-height:12px;color:#303030;transform:scaleX(.9);transform-origin:0 50%">Adamsite-(Y)</div><div class="t" style="left:1004.800px;top:250.2px;font-size:10px;line-height:12px;color:#303030;transform:scaleX(.9);transform-origin:0 50%">Adelite</div><div class="t" style="left:1004.800px;top:262.2px;font-size:10px;line-height:12px;color:#303030;transform:scaleX(.9);transform-origin:0 50%">Admontite</div><div class="t" style="left:1004.800px;top:274.1px;font-size:10px;line-height:12px;color:#303030;transform:scaleX(.9);transform-origin:0 50%">Aegirine</div><div class="t" style="left:1004.800px;top:286.0px;font-size:10px;line-height:12px;color:#303030;transform:scaleX(.9);transform-origin:0 50%">Aegirine-augite</div><div class="t" style="left:1004.800px;top:297.9px;font-size:10px;line-height:12px;color:#303030;transform:scaleX(.9);transform-origin:0 50%">Aenigmatite</div><div class="t" style="left:1004.800px;top:309.9px;font-size:10px;line-height:12px;color:#303030;transform:scaleX(.9);transform-origin:0 50%">Aerinite</div><div class="t" style="left:1004.800px;top:321.8px;font-size:10px;line-height:12px;color:#303030;transform:scaleX(.9);transform-origin:0 50%">Aerugite</div><div class="t" style="left:1004.800px;top:333.7px;font-size:10px;line-height:12px;color:#303030;transform:scaleX(.9);transform-origin:0 50%">Aeschynite-(Ce)</div><div class="t" style="left:1004.800px;top:345.7px;font-size:10px;line-height:12px;color:#303030;transform:scaleX(.9);transform-origin:0 50%">Afghanite</div><div class="t" style="left:1004.800px;top:357.6px;font-size:10px;line-height:12px;color:#303030;transform:scaleX(.9);transform-origin:0 50%">Afwillite</div><div class="t" style="left:1004.800px;top:369.5px;font-size:10px;line-height:12px;color:#303030;transform:scaleX(.9);transform-origin:0 50%">Agardite-(Y)</div><div class="t" style="left:1004.800px;top:381.5px;font-size:10px;line-height:12px;color:#303030;transform:scaleX(.9);transform-origin:0 50%">Agrellite</div><div class="t" style="left:1004.800px;top:393.4px;font-size:10px;line-height:12px;color:#303030;transform:scaleX(.9);transform-origin:0 50%">Agrinierite</div><div class="t" style="left:1004.800px;top:405.3px;font-size:10px;line-height:12px;color:#303030;transform:scaleX(.9);transform-origin:0 50%">Ahlfeldite</div><div class="t" style="left:1004.800px;top:417.2px;font-size:10px;line-height:12px;color:#303030;transform:scaleX(.9);transform-origin:0 50%">Aikinite</div><div class="t" style="left:1004.800px;top:429.2px;font-size:10px;line-height:12px;color:#303030;transform:scaleX(.9);transform-origin:0 50%">Ajoite</div><div class="t" style="left:1004.800px;top:441.1px;font-size:10px;line-height:12px;color:#303030;transform:scaleX(.9);transform-origin:0 50%">Akaganeite</div><div class="t" style="left:1004.800px;top:453.0px;font-size:10px;line-height:12px;color:#303030;transform:scaleX(.9);transform-origin:0 50%">Akatoreite</div><div class="t" style="left:1004.800px;top:465.0px;font-size:10px;line-height:12px;color:#303030;transform:scaleX(.9);transform-origin:0 50%">Akermanite</div><div class="t" style="left:1004.800px;top:476.9px;font-size:10px;line-height:12px;color:#303030;transform:scaleX(.9);transform-origin:0 50%">Akhtenskite</div><div class="t" style="left:1004.800px;top:488.8px;font-size:10px;line-height:12px;color:#303030;transform:scaleX(.9);transform-origin:0 50%">Akimotoite</div><div class="t" style="left:1004.800px;top:500.8px;font-size:10px;line-height:12px;color:#303030;transform:scaleX(.9);transform-origin:0 50%">Akrochordite</div><div class="t" style="left:1004.800px;top:512.7px;font-size:10px;line-height:12px;color:#303030;transform:scaleX(.9);transform-origin:0 50%">Aksaite</div><div class="t" style="left:1004.800px;top:524.6px;font-size:10px;line-height:12px;color:#303030;transform:scaleX(.9);transform-origin:0 50%">Aktashite</div><div class="t" style="left:1004.800px;top:536.5px;font-size:10px;line-height:12px;color:#303030;transform:scaleX(.9);transform-origin:0 50%">Alabandite</div><div class="t" style="left:1004.800px;top:548.5px;font-size:10px;line-height:12px;color:#303030;transform:scaleX(.9);transform-origin:0 50%">Alacranite</div><div class="t" style="left:1004.800px;top:560.4px;font-size:10px;line-height:12px;color:#303030;transform:scaleX(.9);transform-origin:0 50%">Alamosite</div><div class="t" style="left:1004.800px;top:572.3px;font-size:10px;line-height:12px;color:#303030;transform:scaleX(.9);transform-origin:0 50%">Alarsite</div><div class="t" style="left:1004.800px;top:584.3px;font-size:10px;line-height:12px;color:#303030;transform:scaleX(.9);transform-origin:0 50%">Albite - high</div><div class="t" style="left:1004.800px;top:596.2px;font-size:10px;line-height:12px;color:#303030;transform:scaleX(.9);transform-origin:0 50%">Albite - low</div><div class="t" style="left:1004.800px;top:608.1px;font-size:10px;line-height:12px;color:#303030;transform:scaleX(.9);transform-origin:0 50%">Alforsite</div><div class="t" style="left:1004.800px;top:620.1px;font-size:10px;line-height:12px;color:#303030;transform:scaleX(.9);transform-origin:0 50%">Alite Monoclinic</div><div class="t" style="left:1004.800px;top:632.0px;font-size:10px;line-height:12px;color:#303030;transform:scaleX(.9);transform-origin:0 50%">Allabogdanite</div><div class="t" style="left:1004.800px;top:643.9px;font-size:10px;line-height:12px;color:#303030;transform:scaleX(.9);transform-origin:0 50%">Allactite</div></div>
<div class="" style="left:1070.0px;top:118.3px;width:1.5px;height:46.0px;background:#7c7c7c;"></div>
<div class="" style="left:1015.7px;top:663.6px;width:14.7px;height:1.5px;background:#7c7c7c;"></div>
<div class="" style="left:1078.5px;top:8.0px;width:1.5px;height:682.0px;background:#9a9a9a;"></div>
<div class="" style="left:1.0px;top:673.0px;width:1077.5px;height:17.0px;background:#f0f0f0;border-top:1px solid #fff;"></div>
<svg style="left:1068.0px;top:679.0px" width="10" height="10" viewBox="0 0 10 10"><path d="M9.500 2L2 9.500M9.500 5L5 9.500M9.500 8L8 9.500" stroke="#9a9a9a" stroke-width="1"/></svg>
<div class="" style="left:0.0px;top:689.2px;width:1080.0px;height:0.8px;background:#6a6a6a;"></div>
<div class="" style="left:2.0px;top:675.3px;width:78.0px;height:12.7px;border:1px solid;border-color:#acacac #fff #fff #acacac;"></div>
<div class="t " style="left:-159.0px;width:400px;text-align:center;transform-origin:50% 50%;top:675.5px;font-size:11px;line-height:13px;color:#101010;transform:scaleX(0.95);">原始峰图</div>
<div class="" style="left:83.0px;top:675.3px;width:76.0px;height:12.7px;border:1px solid;border-color:#acacac #fff #fff #acacac;"></div>
<div class="t " style="left:-79.0px;width:400px;text-align:center;transform-origin:50% 50%;top:675.5px;font-size:11px;line-height:13px;color:#101010;transform:scaleX(0.95);">0个峰</div>
<div class="" style="left:162.0px;top:675.3px;width:63.0px;height:12.7px;border:1px solid;border-color:#acacac #fff #fff #acacac;"></div>
<div class="t " style="left:-6.5px;width:400px;text-align:center;transform-origin:50% 50%;top:676.0px;font-size:10px;line-height:12px;color:#101010;transform:scaleX(0.9);">2θ=43.209</div>
<div class="" style="left:228.0px;top:675.3px;width:62.0px;height:12.7px;border:1px solid;border-color:#acacac #fff #fff #acacac;"></div>
<div class="t " style="left:59.0px;width:400px;text-align:center;transform-origin:50% 50%;top:676.0px;font-size:10px;line-height:12px;color:#101010;transform:scaleX(0.9);">d=2.0921</div>
<div class="" style="left:293.5px;top:675.3px;width:60.8px;height:12.7px;border:1px solid;border-color:#acacac #fff #fff #acacac;"></div>
<div class="t " style="left:123.9px;width:400px;text-align:center;transform-origin:50% 50%;top:676.0px;font-size:10px;line-height:12px;color:#101010;transform:scaleX(0.9);">I=3548</div>
<div class="" style="left:357.3px;top:675.3px;width:18.2px;height:12.7px;border:1px solid;border-color:#acacac #fff #fff #acacac;"></div>
<div class="t " style="left:166.4px;width:400px;text-align:center;transform-origin:50% 50%;top:676.0px;font-size:10px;line-height:12px;color:#101010;transform:scaleX(0.9);">-2</div>
<div class="" style="left:378.2px;top:675.3px;width:58.8px;height:12.7px;border:1px solid;border-color:#acacac #fff #fff #acacac;"></div>
<div class="t " style="left:207.6px;width:400px;text-align:center;transform-origin:50% 50%;top:676.0px;font-size:10px;line-height:12px;color:#101010;transform:scaleX(0.9);">2θ</div>
<div class="" style="left:440.8px;top:675.3px;width:19.0px;height:12.7px;border:1px solid;border-color:#acacac #fff #fff #acacac;"></div>
<div class="t " style="left:250.3px;width:400px;text-align:center;transform-origin:50% 50%;top:676.0px;font-size:10px;line-height:12px;color:#101010;transform:scaleX(0.9);">0</div>
<div class="" style="left:462.5px;top:675.3px;width:17.1px;height:12.7px;border:1px solid;border-color:#acacac #fff #fff #acacac;"></div>
<div class="t " style="left:271.1px;width:400px;text-align:center;transform-origin:50% 50%;top:676.0px;font-size:10px;line-height:12px;color:#101010;transform:scaleX(0.9);">0</div>
<div class="" style="left:482.6px;top:675.3px;width:17.8px;height:12.7px;border:1px solid;border-color:#acacac #fff #fff #acacac;"></div>
<div class="t " style="left:291.5px;width:400px;text-align:center;transform-origin:50% 50%;top:676.0px;font-size:10px;line-height:12px;color:#101010;transform:scaleX(0.9);">BC</div>
<div class="" style="left:503.5px;top:675.3px;width:23.9px;height:12.7px;border:1px solid;border-color:#acacac #fff #fff #acacac;"></div>
<div class="t " style="left:315.5px;width:400px;text-align:center;transform-origin:50% 50%;top:676.0px;font-size:10px;line-height:12px;color:#9c9c9c;transform:scaleX(0.9);">SAV</div>
<div class="" style="left:531.2px;top:675.3px;width:21.6px;height:12.7px;border:1px solid;border-color:#acacac #fff #fff #acacac;"></div>
<div class="t " style="left:342.0px;width:400px;text-align:center;transform-origin:50% 50%;top:676.0px;font-size:10px;line-height:12px;color:#9c9c9c;transform:scaleX(0.9);">PKS</div>
<div class="" style="left:556.6px;top:675.3px;width:22.8px;height:12.7px;border:1px solid;border-color:#acacac #fff #fff #acacac;"></div>
<div class="t " style="left:368.0px;width:400px;text-align:center;transform-origin:50% 50%;top:676.0px;font-size:10px;line-height:12px;color:#9c9c9c;transform:scaleX(0.9);">DSP</div>
<div class="" style="left:583.2px;top:675.3px;width:22.8px;height:12.7px;border:1px solid;border-color:#acacac #fff #fff #acacac;"></div>
<div class="t " style="left:394.6px;width:400px;text-align:center;transform-origin:50% 50%;top:676.0px;font-size:10px;line-height:12px;color:#9c9c9c;transform:scaleX(0.9);">PDF</div>
<div class="" style="left:609.0px;top:675.3px;width:22.4px;height:12.7px;border:1px solid;border-color:#acacac #fff #fff #acacac;"></div>
<div class="t " style="left:420.2px;width:400px;text-align:center;transform-origin:50% 50%;top:676.0px;font-size:10px;line-height:12px;color:#9c9c9c;transform:scaleX(0.9);">PFT</div>
<div class="" style="left:635.2px;top:675.3px;width:22.0px;height:12.7px;border:1px solid;border-color:#acacac #fff #fff #acacac;"></div>
<div class="t " style="left:446.2px;width:400px;text-align:center;transform-origin:50% 50%;top:676.0px;font-size:10px;line-height:12px;color:#9c9c9c;transform:scaleX(0.9);">RPT</div>
<div class="" style="left:661.0px;top:675.3px;width:24.2px;height:12.7px;border:1px solid;border-color:#acacac #fff #fff #acacac;"></div>
<div class="t " style="left:473.1px;width:400px;text-align:center;transform-origin:50% 50%;top:676.0px;font-size:10px;line-height:12px;color:#9c9c9c;transform:scaleX(0.9);">WPF</div>
<div class="" style="left:689.0px;top:675.3px;width:22.8px;height:12.7px;border:1px solid;border-color:#acacac #fff #fff #acacac;"></div>
<div class="t " style="left:500.4px;width:400px;text-align:center;transform-origin:50% 50%;top:676.0px;font-size:10px;line-height:12px;color:#9c9c9c;transform:scaleX(0.9);">RRP</div>
<div class="" style="left:715.6px;top:675.3px;width:19.7px;height:12.7px;border:1px solid;border-color:#acacac #fff #fff #acacac;"></div>
<div class="t " style="left:525.5px;width:400px;text-align:center;transform-origin:50% 50%;top:676.0px;font-size:10px;line-height:12px;color:#9c9c9c;transform:scaleX(0.9);">PID</div>
<div class="" style="left:741.0px;top:675.3px;width:21.3px;height:12.7px;border:1px solid;border-color:#acacac #fff #fff #acacac;"></div>
<div class="t " style="left:551.6px;width:400px;text-align:center;transform-origin:50% 50%;top:676.0px;font-size:10px;line-height:12px;color:#9c9c9c;transform:scaleX(0.9);">FIT</div>
<div class="" style="left:766.8px;top:675.3px;width:24.7px;height:12.7px;border:1px solid;border-color:#acacac #fff #fff #acacac;"></div>
<div class="t " style="left:579.1px;width:400px;text-align:center;transform-origin:50% 50%;top:676.0px;font-size:10px;line-height:12px;color:#9c9c9c;transform:scaleX(0.9);">ABC</div>
<div class="" style="left:795.3px;top:675.3px;width:20.9px;height:12.7px;border:1px solid;border-color:#acacac #fff #fff #acacac;"></div>
<div class="t " style="left:605.8px;width:400px;text-align:center;transform-origin:50% 50%;top:676.0px;font-size:10px;line-height:12px;color:#9c9c9c;transform:scaleX(0.9);">RIR</div>
<div class="" style="left:490.0px;top:106.0px;width:34.5px;height:67.3px;background:#eeeeee;border:1px solid #c4c4c4;border-radius:0 7px 7px 0;box-shadow:0 2px 6px rgba(0,0,0,.35);overflow:hidden;"><div style="left:0;top:0;width:40px;height:24px;background:linear-gradient(180deg,#f4f4f4,#ededed)"></div></div>
<svg style="left:500.3px;top:115.2px" width="8" height="8" viewBox="0 0 8 8"><path d="M0.500 0.500l7 7M7.500 0.500l-7 7" stroke="#8c8c8c" stroke-width="1"/></svg>
<div class="" style="left:488.0px;top:134.5px;width:33.0px;height:15.3px;background:#f0f0f0;border:1.500px solid;border-color:#6c6c6c #d8d8d8 #d8d8d8 #6c6c6c;"></div>
<div class="" style="left:505.0px;top:136.0px;width:1.5px;height:12.5px;background:#8a8a8a;"></div>
<div class="" style="left:506.5px;top:136.0px;width:13.2px;height:12.3px;background:#f2f2f2;border:1px solid;border-color:#fff #909090 #909090 #fff;"></div>
<svg style="left:509.4px;top:140.7px" width="7.6" height="4.3" viewBox="0 0 7.6 4.3"><path d="M0 0h7.6l-3.8 4.3z" fill="#000"/></svg>
<div class="t " style="left:499.5px;transform-origin:0 50%;top:139.5px;font-size:7px;line-height:9px;color:#707070;transform:scaleX(1);">..</div>
<div class="" style="left:488.0px;top:153.8px;width:33.0px;height:15.3px;background:#f0f0f0;border:1.500px solid;border-color:#6c6c6c #d8d8d8 #d8d8d8 #6c6c6c;"></div>
<div class="" style="left:505.0px;top:155.3px;width:1.5px;height:12.5px;background:#8a8a8a;"></div>
<div class="" style="left:506.5px;top:155.3px;width:13.2px;height:12.3px;background:#f2f2f2;border:1px solid;border-color:#fff #909090 #909090 #fff;"></div>
<svg style="left:509.4px;top:160.0px" width="7.6" height="4.3" viewBox="0 0 7.6 4.3"><path d="M0 0h7.6l-3.8 4.3z" fill="#000"/></svg>
<div class="t " style="left:499.5px;transform-origin:0 50%;top:158.8px;font-size:7px;line-height:9px;color:#707070;transform:scaleX(1);">..</div>
<div class="" style="left:129.3px;top:80.4px;width:369.3px;height:395.2px;background:#f0f0f0;border:1px solid #cfcfcf;border-radius:7px;box-shadow:0 3px 10px rgba(0,0,0,.45);overflow:hidden;"><div style="left:0;top:0;width:380px;height:26.500px;background:#f9f9f9"></div></div>
<svg style="left:136.0px;top:88.7px" width="12.5" height="8.5" viewBox="0 0 12.5 8.5"><path d="M0 4h5.500" stroke="#000" stroke-width="1.400"/><rect x="5" y="0" width="2.300" height="8" fill="#000"/><rect x="7" y="0.900" width="5" height="1.500" fill="#000"/><rect x="7" y="5.300" width="5" height="1.500" fill="#000"/><rect x="10.600" y="0" width="1.800" height="7.600" fill="#000"/></svg>
<div class="t " style="left:154.4px;transform-origin:0 50%;top:87.5px;font-size:11px;line-height:13px;color:#000;transform:scaleX(0.922);">计算χ射线粉末衍射峰图 [FIZ#11] P 1 21/n 1 (14...</div>
<svg style="left:390.0px;top:86.0px" width="100" height="16" viewBox="0 0 100 16"><g stroke="#101010" stroke-width="1" fill="none"><path d="M4 7.500h8"/><rect x="43.500" y="3.500" width="8" height="8" rx="1.300"/><path d="M84 3.500l8 8M92 3.500l-8 8"/></g></svg>
<div class="btn" style="left:131.7px;top:108.4px;width:16.5px;height:17.1px;"></div>
<svg style="left:135.5px;top:112.5px" width="9" height="9" viewBox="0 0 9 9"><rect x="0.500" y="0.500" width="8" height="8" fill="none" stroke="#101010"/><path d="M4.500 0.500v8M0.500 4.500h8" stroke="#101010"/></svg>
<div class="btn" style="left:150.8px;top:108.4px;width:45.6px;height:17.1px;"></div>
<div class="t " style="left:-25.6px;width:400px;text-align:center;transform-origin:50% 50%;top:111.8px;font-size:10px;line-height:12px;color:#fff;transform:scaleX(0.95);">关闭(C)</div>
<div class="t " style="left:-26.4px;width:400px;text-align:center;transform-origin:50% 50%;top:111.0px;font-size:10px;line-height:12px;color:#a0a0a0;transform:scaleX(0.95);">关闭(C)</div>
<div class="btn" style="left:198.3px;top:108.4px;width:45.9px;height:17.1px;"></div>
<div class="t " style="left:22.1px;width:400px;text-align:center;transform-origin:50% 50%;top:111.8px;font-size:10px;line-height:12px;color:#fff;transform:scaleX(0.95);">计算(C)</div>
<div class="t " style="left:21.2px;width:400px;text-align:center;transform-origin:50% 50%;top:111.0px;font-size:10px;line-height:12px;color:#a0a0a0;transform:scaleX(0.95);">计算(C)</div>
<div class="btn" style="left:246.0px;top:108.4px;width:46.7px;height:17.1px;"></div>
<div class="t " style="left:70.2px;width:400px;text-align:center;transform-origin:50% 50%;top:111.8px;font-size:10px;line-height:12px;color:#fff;transform:scaleX(0.95);">重叠(O)</div>
<div class="t " style="left:69.4px;width:400px;text-align:center;transform-origin:50% 50%;top:111.0px;font-size:10px;line-height:12px;color:#a0a0a0;transform:scaleX(0.95);">重叠(O)</div>
<div class="btn" style="left:294.3px;top:108.4px;width:46.4px;height:17.1px;"></div>
<div class="t " style="left:118.3px;width:400px;text-align:center;transform-origin:50% 50%;top:111.8px;font-size:10px;line-height:12px;color:#fff;transform:scaleX(0.95);">复制(C)</div>
<div class="t " style="left:117.5px;width:400px;text-align:center;transform-origin:50% 50%;top:111.0px;font-size:10px;line-height:12px;color:#a0a0a0;transform:scaleX(0.95);">复制(C)</div>
<div class="btn" style="left:342.5px;top:108.4px;width:46.0px;height:17.1px;"></div>
<div class="t " style="left:166.3px;width:400px;text-align:center;transform-origin:50% 50%;top:111.8px;font-size:10px;line-height:12px;color:#fff;transform:scaleX(0.95);">打印(P)</div>
<div class="t " style="left:165.5px;width:400px;text-align:center;transform-origin:50% 50%;top:111.0px;font-size:10px;line-height:12px;color:#a0a0a0;transform:scaleX(0.95);">打印(P)</div>
<div class="btn" style="left:390.5px;top:108.4px;width:45.2px;height:17.1px;"></div>
<div class="t " style="left:213.9px;width:400px;text-align:center;transform-origin:50% 50%;top:111.8px;font-size:10px;line-height:12px;color:#fff;transform:scaleX(0.95);">保存(S)</div>
<div class="t " style="left:213.1px;width:400px;text-align:center;transform-origin:50% 50%;top:111.0px;font-size:10px;line-height:12px;color:#a0a0a0;transform:scaleX(0.95);">保存(S)</div>
<div class="btn" style="left:437.5px;top:108.4px;width:18.3px;height:17.1px;"></div>
<svg style="left:441.0px;top:112.0px" width="9" height="10" viewBox="0 0 9 10"><path d="M3 0.500c-1.500 3 0 7 4.500 8-4 1.500-7.500-1-7-4.500.3-2 1.500-3 2.500-3.500z" fill="#c0c0c0"/></svg>
<div class="" style="left:457.0px;top:108.6px;width:16.5px;height:16.7px;background:#f0f0f0;border:1.300px solid #202020;"></div>
<div class="" style="left:459.3px;top:111.0px;width:12.0px;height:12.0px;border:1px dotted #404040;"></div>
<svg style="left:461.8px;top:112.3px" width="7" height="9.5" viewBox="0 0 7 9.5"><path d="M3.500 0l3.500 3.800h-7zM3.500 9.500l3.500-3.800h-7z" fill="#000"/></svg>
<div class="btn" style="left:476.6px;top:108.4px;width:19.1px;height:17.1px;"></div>
<svg style="left:480.0px;top:110.8px" width="12.5" height="12.5" viewBox="0 0 12.5 12.5"><path d="M3.700 0.500h5.100l3.200 3.200v5.100l-3.200 3.200h-5.100l-3.200-3.200v-5.100z" fill="#18d0e0" stroke="#086878" stroke-width="1"/><text x="6.250" y="9.600" font-family="Liberation Sans,sans-serif" font-size="9" font-weight="bold" fill="#084858" text-anchor="middle">?</text></svg>
<div class="sunk" style="left:131.7px;top:128.7px;width:131.8px;height:15.7px;background:#fff;"></div>
<div class="btn" style="left:223.0px;top:129.7px;width:13.2px;height:13.7px;"></div>
<div class="btn" style="left:236.5px;top:129.7px;width:13.2px;height:13.7px;"></div>
<div class="btn" style="left:250.0px;top:129.7px;width:12.7px;height:13.7px;"></div>
<div class="t " style="left:29.6px;width:400px;text-align:center;transform-origin:50% 50%;top:133.2px;font-size:8px;line-height:10px;color:#b0b0b0;transform:scaleX(1);">...</div>
<svg style="left:239.5px;top:132.7px" width="8" height="8" viewBox="0 0 8 8"><path d="M6.500 1v3.500h-4" fill="none" stroke="#b8b8b8" stroke-width="1.400"/><path d="M0.500 4.500l3-2.500v5z" fill="#b8b8b8"/><path d="M4 1.200h3" stroke="#b8b8b8" stroke-width="1.200"/></svg>
<svg style="left:252.5px;top:134.8px" width="7.6" height="4.3" viewBox="0 0 7.6 4.3"><path d="M0 0h7.6l-3.8 4.3z" fill="#a0a0a0"/></svg>
<div class="sunk" style="left:268.7px;top:128.7px;width:77.0px;height:15.7px;background:#fff;"></div>
<div class="t " style="left:84.2px;width:400px;text-align:center;transform-origin:50% 50%;top:131.5px;font-size:10px;line-height:12px;color:#fff;transform:scaleX(0.92);">JCS#</div>
<div class="t " style="left:83.4px;width:400px;text-align:center;transform-origin:50% 50%;top:130.7px;font-size:10px;line-height:12px;color:#a0a0a0;transform:scaleX(0.92);">JCS#</div>
<div class="btn" style="left:318.3px;top:129.7px;width:13.5px;height:13.7px;"></div>
<svg style="left:321.3px;top:132.7px" width="8" height="8" viewBox="0 0 8 8"><path d="M6.500 1v3.500h-4" fill="none" stroke="#b8b8b8" stroke-width="1.400"/><path d="M0.500 4.500l3-2.500v5z" fill="#b8b8b8"/><path d="M4 1.200h3" stroke="#b8b8b8" stroke-width="1.200"/></svg>
<div class="btn" style="left:332.0px;top:129.7px;width:12.7px;height:13.7px;"></div>
<svg style="left:334.6px;top:134.8px" width="7.6" height="4.3" viewBox="0 0 7.6 4.3"><path d="M0 0h7.6l-3.8 4.3z" fill="#a0a0a0"/></svg>
<div class="sunk" style="left:349.6px;top:128.7px;width:78.2px;height:15.7px;background:#fff;"></div>
<div class="t " style="left:165.8px;width:400px;text-align:center;transform-origin:50% 50%;top:131.5px;font-size:10px;line-height:12px;color:#fff;transform:scaleX(0.92);">FIZ#</div>
<div class="t " style="left:165.0px;width:400px;text-align:center;transform-origin:50% 50%;top:130.7px;font-size:10px;line-height:12px;color:#a0a0a0;transform:scaleX(0.92);">FIZ#</div>
<div class="btn" style="left:400.4px;top:129.7px;width:13.5px;height:13.7px;"></div>
<svg style="left:403.3px;top:132.7px" width="8" height="8" viewBox="0 0 8 8"><path d="M6.500 1v3.500h-4" fill="none" stroke="#b8b8b8" stroke-width="1.400"/><path d="M0.500 4.500l3-2.500v5z" fill="#b8b8b8"/><path d="M4 1.200h3" stroke="#b8b8b8" stroke-width="1.200"/></svg>
<div class="btn" style="left:414.0px;top:129.7px;width:12.8px;height:13.7px;"></div>
<svg style="left:416.6px;top:134.8px" width="7.6" height="4.3" viewBox="0 0 7.6 4.3"><path d="M0 0h7.6l-3.8 4.3z" fill="#a0a0a0"/></svg>
<div class="btn" style="left:433.0px;top:128.2px;width:19.5px;height:17.0px;"></div>
<div class="btn" style="left:453.7px;top:128.2px;width:19.5px;height:17.0px;"></div>
<div class="btn" style="left:475.6px;top:128.2px;width:19.5px;height:17.0px;"></div>
<svg style="left:436.5px;top:130.7px" width="13" height="12" viewBox="0 0 13 12"><path d="M1 3h8v8h-8z" fill="#187868" stroke="#0a3030" stroke-width=".8"/><ellipse cx="5" cy="3" rx="4" ry="1.600" fill="#30a890" stroke="#0a3030" stroke-width=".7"/><rect x="3" y="0.500" width="4" height="2.500" fill="#404848"/><rect x="7" y="6.500" width="5.500" height="5" fill="#3040c0" stroke="#101850" stroke-width=".6"/><path d="M8 8h3.500M8 10h3.500" stroke="#c0d0ff" stroke-width=".7"/></svg>
<svg style="left:456.5px;top:131.2px" width="14" height="11" viewBox="0 0 14 11"><path d="M0.500 10.500v-8h3.500l1 1.400h5v1.600" fill="none" stroke="#b4b4b4"/><path d="M0.500 10.500l2.500-5.500h10.500l-2.500 5.500z" fill="#e4e4e4" stroke="#b4b4b4"/><path d="M8 1.500c1.500-1.500 3.500-1.500 4.500 0" stroke="#b4b4b4" fill="none"/></svg>
<svg style="left:478.5px;top:131.2px" width="14" height="11" viewBox="0 0 14 11"><path d="M0.500 10.500v-8h3.500l1 1.400h6v1.600" fill="none" stroke="#b4b4b4"/><path d="M0.500 10.500l2.500-5.500h10.500l-2.500 5.500z" fill="#ececec" stroke="#b4b4b4"/></svg>
<div class="" style="left:131.5px;top:165.3px;width:364.5px;height:1.0px;background:#fff;"></div>
<div class="" style="left:133.0px;top:147.3px;width:31.0px;height:19.0px;background:#f0f0f0;border:1px solid;border-color:#fff #707070 #f0f0f0 #fff;"></div>
<div class="t " style="left:-51.5px;width:400px;text-align:center;transform-origin:50% 50%;top:149.8px;font-size:11px;line-height:13px;color:#000;transform:scaleX(0.98);">相物</div>
<div class="" style="left:193.0px;top:151.3px;width:2.0px;height:12.0px;border-left:1px solid #a0a0a0;border-right:1px solid #fff;"></div>
<div class="t " style="left:-21.6px;width:400px;text-align:center;transform-origin:50% 50%;top:151.3px;font-size:11px;line-height:13px;color:#000;transform:scaleX(0.98);">原子</div>
<div class="" style="left:223.5px;top:151.3px;width:2.0px;height:12.0px;border-left:1px solid #a0a0a0;border-right:1px solid #fff;"></div>
<div class="t " style="left:8.4px;width:400px;text-align:center;transform-origin:50% 50%;top:151.3px;font-size:11px;line-height:13px;color:#000;transform:scaleX(0.98);">三维</div>
<div class="" style="left:254.3px;top:151.3px;width:2.0px;height:12.0px;border-left:1px solid #a0a0a0;border-right:1px solid #fff;"></div>
<div class="t " style="left:39.4px;width:400px;text-align:center;transform-origin:50% 50%;top:151.3px;font-size:11px;line-height:13px;color:#000;transform:scaleX(0.98);">晶面</div>
<div class="" style="left:284.7px;top:151.3px;width:2.0px;height:12.0px;border-left:1px solid #a0a0a0;border-right:1px solid #fff;"></div>
<div class="t " style="left:70.2px;width:400px;text-align:center;transform-origin:50% 50%;top:151.3px;font-size:11px;line-height:13px;color:#000;transform:scaleX(0.98);">峰线</div>
<div class="" style="left:315.5px;top:151.3px;width:2.0px;height:12.0px;border-left:1px solid #a0a0a0;border-right:1px solid #fff;"></div>
<div class="t " style="left:101.0px;width:400px;text-align:center;transform-origin:50% 50%;top:151.3px;font-size:11px;line-height:13px;color:#000;transform:scaleX(0.98);">配键</div>
<div class="" style="left:359.0px;top:151.3px;width:2.0px;height:12.0px;border-left:1px solid #a0a0a0;border-right:1px solid #fff;"></div>
<div class="t " style="left:137.8px;width:400px;text-align:center;transform-origin:50% 50%;top:151.3px;font-size:11px;line-height:13px;color:#000;transform:scaleX(0.93);">计算(C)</div>
<div class="btn" style="left:364.0px;top:148.8px;width:13.0px;height:15.5px;"></div>
<svg style="left:368.0px;top:151.8px" width="5" height="10" viewBox="0 0 5 10"><path d="M2.500 0l2.500 3h-5zM2.500 10l2.500-3h-5zM2.500 2v6" fill="#000" stroke="#000" stroke-width="1"/></svg>
<div class="btn" style="left:433.0px;top:146.8px;width:19.5px;height:17.5px;"></div>
<div class="btn" style="left:453.7px;top:146.8px;width:19.5px;height:17.5px;"></div>
<div class="btn" style="left:475.6px;top:146.8px;width:19.5px;height:17.5px;"></div>
<svg style="left:437.0px;top:149.8px" width="12" height="11" viewBox="0 0 12 11"><rect x="0.500" y="0.500" width="11" height="10" fill="#dcdcdc" stroke="#b8b8b8"/><path d="M3 9.500v-6M5.500 9.500v-4M8 9.500v-7" stroke="#b0b0b0" stroke-width="1.500"/></svg>
<svg style="left:458.5px;top:149.3px" width="11" height="12" viewBox="0 0 11 12"><path d="M2.500 5.500v-2c0-3.500 6-3.500 6 0v2" fill="none" stroke="#b8b8b8" stroke-width="1.200"/><rect x="0.800" y="5.500" width="9.400" height="6" fill="#e4e4e4" stroke="#b8b8b8"/></svg>
<svg style="left:479.5px;top:149.3px" width="12" height="12" viewBox="0 0 12 12"><path d="M0.800 3.500h7.700v7.700h-7.700zM3.500 0.800h7.700v7.700h-7.700zM0.800 3.500l2.700-2.700M8.500 3.500l2.700-2.700M0.800 11.200l2.700-2.700M8.500 11.200l2.700-2.700" fill="none" stroke="#b8b8b8" stroke-width="1"/></svg>
<div class="" style="left:136.0px;top:174.3px;width:353.5px;height:295.5px;border:1px solid #c4c4c4;box-shadow:1px 1px 0 #fff, inset 1px 1px 0 #fff;"></div>
<div class="" style="left:140.5px;top:168.5px;width:146.0px;height:12.0px;background:#f0f0f0;"></div>
<div class="t " style="left:142.8px;transform-origin:0 50%;top:169.2px;font-size:10px;line-height:12px;color:#fff;transform:scaleX(1.03);">名称,化学式,空间群,晶胞常数等</div>
<div class="t " style="left:142.0px;transform-origin:0 50%;top:168.4px;font-size:10px;line-height:12px;color:#a4a4a4;transform:scaleX(1.03);">名称,化学式,空间群,晶胞常数等</div>
<div class="sunk" style="left:140.8px;top:181.4px;width:286.2px;height:14.0px;background:#fff;"></div>
<div class="t " style="left:144.4px;transform-origin:0 50%;top:182.9px;font-size:10px;line-height:12px;color:#181818;transform:scaleX(0.89);">Tristrontium Cyclo-triphosphate(V) Heptahydrate</div>
<div class="btn" style="left:414.8px;top:183.2px;width:11.5px;height:11.0px;"></div>
<div class="t " style="left:220.5px;width:400px;text-align:center;transform-origin:50% 50%;top:183.3px;font-size:9px;line-height:11px;color:#b0b0b0;transform:scaleX(1);">&gt;</div>
<div class="sunk" style="left:428.4px;top:181.4px;width:56.8px;height:14.0px;background:#fff;"></div>
<div class="t " style="left:432.0px;transform-origin:0 50%;top:182.9px;font-size:10px;line-height:12px;color:#181818;transform:scaleX(0.9);">A3B6X25</div>
<div class="sunk" style="left:140.8px;top:199.6px;width:286.2px;height:14.0px;background:#fff;"></div>
<div class="t " style="left:144.4px;transform-origin:0 50%;top:201.1px;font-size:10px;line-height:12px;color:#181818;transform:scaleX(0.89);">Sr3 (P3 O9)2 (H2 O)7</div>
<div class="btn" style="left:414.8px;top:201.4px;width:11.5px;height:11.0px;"></div>
<div class="t " style="left:220.5px;width:400px;text-align:center;transform-origin:50% 50%;top:201.5px;font-size:9px;line-height:11px;color:#b0b0b0;transform:scaleX(1);">&gt;</div>
<div class="sunk" style="left:428.4px;top:199.6px;width:24.2px;height:14.0px;background:#fff;"></div>
<div class="t " style="left:432.0px;transform-origin:0 50%;top:201.1px;font-size:10px;line-height:12px;color:#181818;transform:scaleX(0.9);">4</div>
<div class="sunk" style="left:455.1px;top:199.6px;width:30.1px;height:14.0px;background:#fff;"></div>
<div class="t " style="left:458.7px;transform-origin:0 50%;top:201.1px;font-size:10px;line-height:12px;color:#181818;transform:scaleX(0.9);">I/Ic</div>
<div class="sunk" style="left:140.8px;top:217.9px;width:50.2px;height:15.5px;background:#fff;"></div>
<div class="t " style="left:144.4px;transform-origin:0 50%;top:220.2px;font-size:10px;line-height:12px;color:#181818;transform:scaleX(0.9);">2.6203</div>
<div class="sunk" style="left:193.8px;top:217.9px;width:50.2px;height:15.5px;background:#fff;"></div>
<div class="t " style="left:197.4px;transform-origin:0 50%;top:220.2px;font-size:10px;line-height:12px;color:#181818;transform:scaleX(0.9);">158.2</div>
<div class="" style="left:235.5px;top:219.8px;width:1.2px;height:7.0px;background:#505050;"></div>
<div class="" style="left:231.0px;top:220.5px;width:12.0px;height:12.0px;border-left:1px solid #d8d8d8;"></div>
<div class="sunk" style="left:246.4px;top:217.9px;width:51.0px;height:15.5px;background:#fff;"></div>
<div class="t " style="left:250.0px;transform-origin:0 50%;top:220.2px;font-size:10px;line-height:12px;color:#181818;transform:scaleX(0.9);">oP136</div>
<div class="" style="left:300.5px;top:219.5px;width:8.5px;height:13.0px;background:#18d0e0;border:1px solid #0a8898;"></div>
<div class="t " style="left:104.8px;width:400px;text-align:center;transform-origin:50% 50%;top:220.0px;font-size:10px;line-height:12px;color:#083848;transform:scaleX(1);font-weight:bold;font-family:"Liberation Serif",serif;">i</div>
<div class="sunk" style="left:311.2px;top:217.9px;width:173.5px;height:15.5px;background:#fff;"></div>
<div class="t " style="left:314.8px;transform-origin:0 50%;top:220.2px;font-size:10px;line-height:12px;color:#181818;transform:scaleX(0.9);">Pnma (62)</div>
<div class="btn" style="left:430.4px;top:219.7px;width:12.5px;height:12.3px;"></div>
<div class="btn" style="left:443.0px;top:219.7px;width:12.5px;height:12.3px;"></div>
<div class="btn" style="left:456.0px;top:219.7px;width:13.5px;height:12.3px;"></div>
<div class="btn" style="left:470.0px;top:219.7px;width:13.7px;height:12.3px;"></div>
<svg style="left:434.0px;top:222.2px" width="5" height="8" viewBox="0 0 5 8"><circle cx="1.500" cy="1.500" r="1" fill="#b0b0b0"/><circle cx="3.500" cy="6" r="1" fill="#b0b0b0"/></svg>
<svg style="left:446.0px;top:221.7px" width="7" height="9" viewBox="0 0 7 9"><path d="M3.500 0.500c1.500 1 2.500 2.500 2.500 4.500s-1 3.500-2.500 3.500-2.500-1.500-2.500-3.500 1-3.500 2.500-4.500z" fill="#e0e0e0" stroke="#b0b0b0" stroke-width=".8"/></svg>
<svg style="left:459.5px;top:222.2px" width="7" height="8" viewBox="0 0 7 8"><rect x="0.500" y="0.500" width="6" height="7" fill="none" stroke="#303030" stroke-width="1"/><path d="M3.500 0.500v7M0.500 4h6" stroke="#505050" stroke-width=".8"/></svg>
<svg style="left:473.0px;top:224.2px" width="7.6" height="4.3" viewBox="0 0 7.6 4.3"><path d="M0 0h7.6l-3.8 4.3z" fill="#000"/></svg>
<div class="sunk" style="left:140.8px;top:236.2px;width:50.2px;height:15.5px;background:#fff;"></div>
<div class="t " style="left:144.4px;transform-origin:0 50%;top:238.5px;font-size:10px;line-height:12px;color:#181818;transform:scaleX(0.9);">16.05</div>
<div class="sunk" style="left:193.8px;top:236.2px;width:50.2px;height:15.5px;background:#fff;"></div>
<div class="t " style="left:197.4px;transform-origin:0 50%;top:238.5px;font-size:10px;line-height:12px;color:#181818;transform:scaleX(0.9);">12.33</div>
<div class="sunk" style="left:246.4px;top:236.2px;width:51.0px;height:15.5px;background:#fff;"></div>
<div class="t " style="left:250.0px;transform-origin:0 50%;top:238.5px;font-size:10px;line-height:12px;color:#181818;transform:scaleX(0.9);">10.87</div>
<div class="sunk" style="left:299.9px;top:236.2px;width:43.1px;height:15.5px;background:#fff;"></div>
<div class="t " style="left:303.5px;transform-origin:0 50%;top:238.5px;font-size:10px;line-height:12px;color:#a0a0a0;transform:scaleX(0.9);">90.0</div>
<div class="sunk" style="left:345.8px;top:236.2px;width:44.2px;height:15.5px;background:#fff;"></div>
<div class="t " style="left:349.4px;transform-origin:0 50%;top:238.5px;font-size:10px;line-height:12px;color:#a0a0a0;transform:scaleX(0.9);">90.0</div>
<div class="sunk" style="left:392.0px;top:236.2px;width:43.7px;height:15.5px;background:#fff;"></div>
<div class="t " style="left:395.6px;transform-origin:0 50%;top:238.5px;font-size:10px;line-height:12px;color:#a0a0a0;transform:scaleX(0.9);">90.0</div>
<div class="sunk" style="left:437.7px;top:236.2px;width:33.8px;height:15.5px;background:#fff;"></div>
<div class="t " style="left:441.3px;transform-origin:0 50%;top:238.5px;font-size:10px;line-height:12px;color:#181818;transform:scaleX(0.9);">2151.1</div>
<div class="btn" style="left:472.0px;top:237.5px;width:12.7px;height:13.0px;"></div>
<div class="t " style="left:278.3px;width:400px;text-align:center;transform-origin:50% 50%;top:238.8px;font-size:9px;line-height:11px;color:#202020;transform:scaleX(1);">P</div>
<div class="sunk" style="left:140.8px;top:254.4px;width:50.2px;height:15.3px;background:#fff;"></div>
<div class="t " style="left:144.4px;transform-origin:0 50%;top:256.6px;font-size:10px;line-height:12px;color:#181818;transform:scaleX(0.9);">0.01</div>
<div class="sunk" style="left:193.8px;top:254.4px;width:50.2px;height:15.3px;background:#fff;"></div>
<div class="t " style="left:197.4px;transform-origin:0 50%;top:256.6px;font-size:10px;line-height:12px;color:#181818;transform:scaleX(0.9);">0.01</div>
<div class="sunk" style="left:246.4px;top:254.4px;width:51.0px;height:15.3px;background:#fff;"></div>
<div class="t " style="left:250.0px;transform-origin:0 50%;top:256.6px;font-size:10px;line-height:12px;color:#181818;transform:scaleX(0.9);">0.01</div>
<div class="sunk" style="left:299.9px;top:254.4px;width:43.1px;height:15.3px;background:#fff;"></div>
<div class="t " style="left:303.5px;transform-origin:0 50%;top:256.6px;font-size:10px;line-height:12px;color:#a0a0a0;transform:scaleX(0.9);">(esd)</div>
<div class="sunk" style="left:345.8px;top:254.4px;width:44.2px;height:15.3px;background:#fff;"></div>
<div class="t " style="left:349.4px;transform-origin:0 50%;top:256.6px;font-size:10px;line-height:12px;color:#a0a0a0;transform:scaleX(0.9);">(esd)</div>
<div class="sunk" style="left:392.0px;top:254.4px;width:43.7px;height:15.3px;background:#fff;"></div>
<div class="t " style="left:395.6px;transform-origin:0 50%;top:256.6px;font-size:10px;line-height:12px;color:#a0a0a0;transform:scaleX(0.9);">(esd)</div>
<div class="sunk" style="left:437.7px;top:254.4px;width:33.8px;height:15.3px;background:#fff;"></div>
<div class="t " style="left:441.3px;transform-origin:0 50%;top:256.6px;font-size:10px;line-height:12px;color:#181818;transform:scaleX(0.9);">2.96</div>
<div class="btn" style="left:472.0px;top:255.7px;width:12.7px;height:13.0px;"></div>
<div class="t " style="left:278.3px;width:400px;text-align:center;transform-origin:50% 50%;top:257.0px;font-size:9px;line-height:11px;color:#202020;transform:scaleX(1);">S</div>
<div class="sunk" style="left:141.4px;top:273.5px;width:343.3px;height:92.5px;background:#fff;"></div>
<div class="" style="left:471.0px;top:275.0px;width:12.7px;height:90.0px;background:#f0f0f0;"></div>
<svg style="left:473.5px;top:279.5px" width="8" height="5" viewBox="0 0 8 5"><path d="M4 0l4 5h-8z" fill="#b0b0b0"/></svg>
<svg style="left:473.5px;top:355.5px" width="8" height="5" viewBox="0 0 8 5"><path d="M4 5l4-5h-8z" fill="#b0b0b0"/></svg>
<div class="t " style="left:144.0px;transform-origin:0 50%;top:276.2px;font-size:10px;line-height:12px;color:#181818;transform:scaleX(0.8965);">"Structure cristalline du trimetaphosphate de strontium heptahydrate Sr3 (P3 O9)2</div>
<div class="t " style="left:144.0px;transform-origin:0 50%;top:287.1px;font-size:10px;line-height:12px;color:#181818;transform:scaleX(0.899);">(H2 O)", Tordjman, I.;Durif, A.;Guitel, J.C., Acta Crystallographica B (24,1968-</div>
<div class="t " style="left:144.0px;transform-origin:0 50%;top:298.0px;font-size:10px;line-height:12px;color:#181818;transform:scaleX(0.909);">38,1982), v32 (1976) 205-208</div>
<div class="sunk" style="left:141.4px;top:370.8px;width:343.3px;height:93.7px;background:#fff;"></div>
<div class="" style="left:471.0px;top:372.3px;width:12.7px;height:91.2px;background:#f0f0f0;"></div>
<svg style="left:473.5px;top:376.8px" width="8" height="5" viewBox="0 0 8 5"><path d="M4 0l4 5h-8z" fill="#b0b0b0"/></svg>
<svg style="left:473.5px;top:454.0px" width="8" height="5" viewBox="0 0 8 5"><path d="M4 5l4-5h-8z" fill="#b0b0b0"/></svg>
<div class="t " style="left:144.0px;transform-origin:0 50%;top:373.2px;font-size:10px;line-height:12px;color:#181818;transform:scaleX(0.907);">R=0.043. PDF#19-255. The structure has been assigned a PDF number</div>
<div class="t " style="left:144.0px;transform-origin:0 50%;top:384.3px;font-size:10px;line-height:12px;color:#181818;transform:scaleX(0.91);">(calculated powder diffraction data): 01-085-0334. The structure has been</div>
<div class="t " style="left:144.0px;transform-origin:0 50%;top:395.3px;font-size:10px;line-height:12px;color:#181818;transform:scaleX(0.892);">assigned a PDF number (experimental powder diffraction data): 19-255.</div>
<div class="t " style="left:144.0px;transform-origin:0 50%;top:406.4px;font-size:10px;line-height:12px;color:#181818;transform:scaleX(0.9);">Temperature factors available. X-ray diffraction from single crystal. The</div>
<div class="t " style="left:144.0px;transform-origin:0 50%;top:417.4px;font-size:10px;line-height:12px;color:#181818;transform:scaleX(0.915);">coordinates given in the paper contain an error. The values in the database have</div>
<div class="t " style="left:144.0px;transform-origin:0 50%;top:428.5px;font-size:10px;line-height:12px;color:#181818;transform:scaleX(0.905);">been corrected.</div>
<div class="t wm" style="left:-132.0px;top:-40.6px;">微信公众号：资源抽屉</div>
<div class="t wm" style="left:-132.0px;top:56.7px;">微信公众号：资源抽屉</div>
<div class="t wm" style="left:-132.0px;top:154.0px;">微信公众号：资源抽屉</div>
<div class="t wm" style="left:-132.0px;top:251.3px;">微信公众号：资源抽屉</div>
<div class="t wm" style="left:-132.0px;top:348.6px;">微信公众号：资源抽屉</div>
<div class="t wm" style="left:-132.0px;top:445.9px;">微信公众号：资源抽屉</div>
<div class="t wm" style="left:-132.0px;top:543.2px;">微信公众号：资源抽屉</div>
<div class="t wm" style="left:-132.0px;top:640.5px;">微信公众号：资源抽屉</div>
<div class="t wm" style="left:-132.0px;top:737.8px;">微信公众号：资源抽屉</div>
<div class="t wm" style="left:44.5px;top:-40.6px;">微信公众号：资源抽屉</div>
<div class="t wm" style="left:44.5px;top:56.7px;">微信公众号：资源抽屉</div>
<div class="t wm" style="left:44.5px;top:154.0px;">微信公众号：资源抽屉</div>
<div class="t wm" style="left:44.5px;top:251.3px;">微信公众号：资源抽屉</div>
<div class="t wm" style="left:44.5px;top:348.6px;">微信公众号：资源抽屉</div>
<div class="t wm" style="left:44.5px;top:445.9px;">微信公众号：资源抽屉</div>
<div class="t wm" style="left:44.5px;top:543.2px;">微信公众号：资源抽屉</div>
<div class="t wm" style="left:44.5px;top:640.5px;">微信公众号：资源抽屉</div>
<div class="t wm" style="left:44.5px;top:737.8px;">微信公众号：资源抽屉</div>
<div class="t wm" style="left:221.0px;top:-40.6px;">微信公众号：资源抽屉</div>
<div class="t wm" style="left:221.0px;top:56.7px;">微信公众号：资源抽屉</div>
<div class="t wm" style="left:221.0px;top:154.0px;">微信公众号：资源抽屉</div>
<div class="t wm" style="left:221.0px;top:251.3px;">微信公众号：资源抽屉</div>
<div class="t wm" style="left:221.0px;top:348.6px;">微信公众号：资源抽屉</div>
<div class="t wm" style="left:221.0px;top:445.9px;">微信公众号：资源抽屉</div>
<div class="t wm" style="left:221.0px;top:543.2px;">微信公众号：资源抽屉</div>
<div class="t wm" style="left:221.0px;top:640.5px;">微信公众号：资源抽屉</div>
<div class="t wm" style="left:221.0px;top:737.8px;">微信公众号：资源抽屉</div>
<div class="t wm" style="left:397.5px;top:-40.6px;">微信公众号：资源抽屉</div>
<div class="t wm" style="left:397.5px;top:56.7px;">微信公众号：资源抽屉</div>
<div class="t wm" style="left:397.5px;top:154.0px;">微信公众号：资源抽屉</div>
<div class="t wm" style="left:397.5px;top:251.3px;">微信公众号：资源抽屉</div>
<div class="t wm" style="left:397.5px;top:348.6px;">微信公众号：资源抽屉</div>
<div class="t wm" style="left:397.5px;top:445.9px;">微信公众号：资源抽屉</div>
<div class="t wm" style="left:397.5px;top:543.2px;">微信公众号：资源抽屉</div>
<div class="t wm" style="left:397.5px;top:640.5px;">微信公众号：资源抽屉</div>
<div class="t wm" style="left:397.5px;top:737.8px;">微信公众号：资源抽屉</div>
<div class="t wm" style="left:574.0px;top:-40.6px;">微信公众号：资源抽屉</div>
<div class="t wm" style="left:574.0px;top:56.7px;">微信公众号：资源抽屉</div>
<div class="t wm" style="left:574.0px;top:154.0px;">微信公众号：资源抽屉</div>
<div class="t wm" style="left:574.0px;top:251.3px;">微信公众号：资源抽屉</div>
<div class="t wm" style="left:574.0px;top:348.6px;">微信公众号：资源抽屉</div>
<div class="t wm" style="left:574.0px;top:445.9px;">微信公众号：资源抽屉</div>
<div class="t wm" style="left:574.0px;top:543.2px;">微信公众号：资源抽屉</div>
<div class="t wm" style="left:574.0px;top:640.5px;">微信公众号：资源抽屉</div>
<div class="t wm" style="left:574.0px;top:737.8px;">微信公众号：资源抽屉</div>
<div class="t wm" style="left:750.5px;top:-40.6px;">微信公众号：资源抽屉</div>
<div class="t wm" style="left:750.5px;top:56.7px;">微信公众号：资源抽屉</div>
<div class="t wm" style="left:750.5px;top:154.0px;">微信公众号：资源抽屉</div>
<div class="t wm" style="left:750.5px;top:251.3px;">微信公众号：资源抽屉</div>
<div class="t wm" style="left:750.5px;top:348.6px;">微信公众号：资源抽屉</div>
<div class="t wm" style="left:750.5px;top:445.9px;">微信公众号：资源抽屉</div>
<div class="t wm" style="left:750.5px;top:543.2px;">微信公众号：资源抽屉</div>
<div class="t wm" style="left:750.5px;top:640.5px;">微信公众号：资源抽屉</div>
<div class="t wm" style="left:750.5px;top:737.8px;">微信公众号：资源抽屉</div>
<div class="t wm" style="left:927.0px;top:-40.6px;">微信公众号：资源抽屉</div>
<div class="t wm" style="left:927.0px;top:56.7px;">微信公众号：资源抽屉</div>
<div class="t wm" style="left:927.0px;top:154.0px;">微信公众号：资源抽屉</div>
<div class="t wm" style="left:927.0px;top:251.3px;">微信公众号：资源抽屉</div>
<div class="t wm" style="left:927.0px;top:348.6px;">微信公众号：资源抽屉</div>
<div class="t wm" style="left:927.0px;top:445.9px;">微信公众号：资源抽屉</div>
<div class="t wm" style="left:927.0px;top:543.2px;">微信公众号：资源抽屉</div>
<div class="t wm" style="left:927.0px;top:640.5px;">微信公众号：资源抽屉</div>
<div class="t wm" style="left:927.0px;top:737.8px;">微信公众号：资源抽屉</div>
<div class="t wm" style="left:1103.5px;top:-40.6px;">微信公众号：资源抽屉</div>
<div class="t wm" style="left:1103.5px;top:56.7px;">微信公众号：资源抽屉</div>
<div class="t wm" style="left:1103.5px;top:154.0px;">微信公众号：资源抽屉</div>
<div class="t wm" style="left:1103.5px;top:251.3px;">微信公众号：资源抽屉</div>
<div class="t wm" style="left:1103.5px;top:348.6px;">微信公众号：资源抽屉</div>
<div class="t wm" style="left:1103.5px;top:445.9px;">微信公众号：资源抽屉</div>
<div class="t wm" style="left:1103.5px;top:543.2px;">微信公众号：资源抽屉</div>
<div class="t wm" style="left:1103.5px;top:640.5px;">微信公众号：资源抽屉</div>
<div class="t wm" style="left:1103.5px;top:737.8px;">微信公众号：资源抽屉</div>
</body></html>
